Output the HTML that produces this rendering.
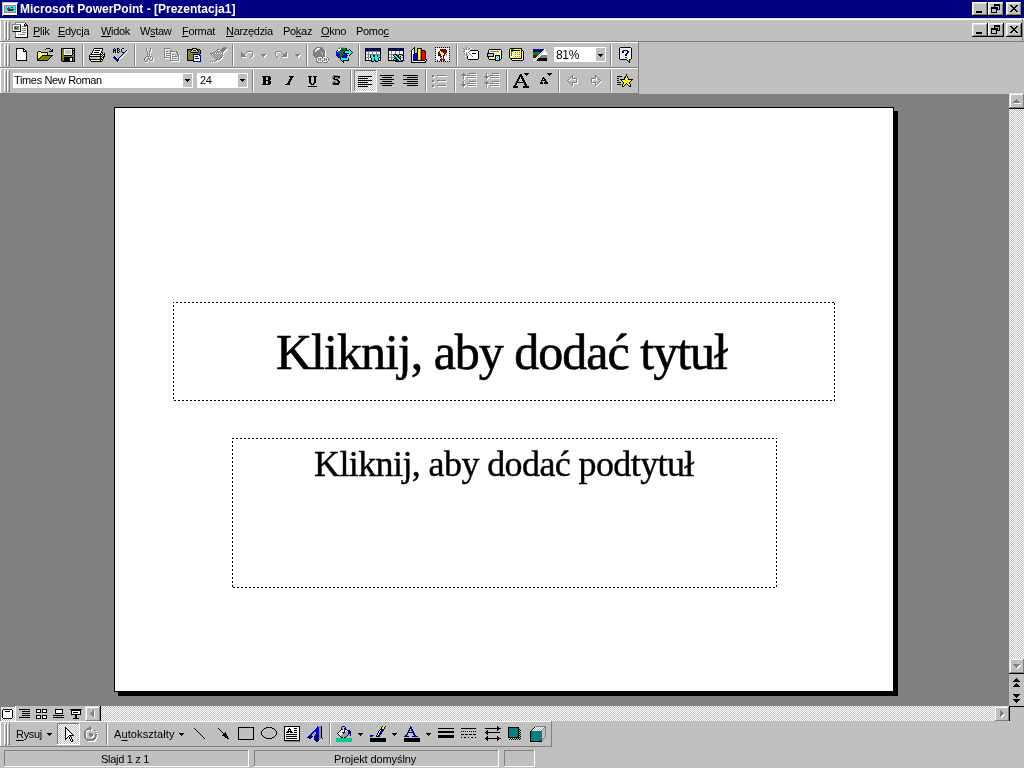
<!DOCTYPE html>
<html><head><meta charset="utf-8">
<style>
*{margin:0;padding:0;box-sizing:border-box}
html,body{width:1024px;height:768px;overflow:hidden;background:#c0c0c0;font-family:"Liberation Sans",sans-serif;font-size:11px;color:#000;position:relative}
.a{position:absolute}
.t{white-space:nowrap;line-height:13px;letter-spacing:-0.3px;will-change:transform}
.u{text-decoration:underline;text-underline-offset:2px}
.dt{font-family:"Liberation Serif",serif;white-space:nowrap;position:absolute;will-change:transform}
svg{display:block}
</style></head><body>

<div class="a" style="left:0px;top:0px;width:1024px;height:18px;background:#000080;"></div>
<div class="a t" style="left:20px;top:1px;color:#fff;font-weight:bold;font-size:12px;line-height:16px;letter-spacing:0px">Microsoft PowerPoint - [Prezentacja1]</div>
<div class="a" style="left:972px;top:2px;width:16px;height:14px;background:#000;"></div><div class="a" style="left:972px;top:2px;width:15px;height:13px;background:#fff;"></div><div class="a" style="left:973px;top:3px;width:14px;height:12px;background:#808080;"></div><div class="a" style="left:973px;top:3px;width:13px;height:11px;background:#dfdfdf;"></div><div class="a" style="left:974px;top:4px;width:12px;height:10px;background:#c0c0c0;"></div>
<div class="a" style="left:988px;top:2px;width:16px;height:14px;background:#000;"></div><div class="a" style="left:988px;top:2px;width:15px;height:13px;background:#fff;"></div><div class="a" style="left:989px;top:3px;width:14px;height:12px;background:#808080;"></div><div class="a" style="left:989px;top:3px;width:13px;height:11px;background:#dfdfdf;"></div><div class="a" style="left:990px;top:4px;width:12px;height:10px;background:#c0c0c0;"></div>
<div class="a" style="left:1006px;top:2px;width:16px;height:14px;background:#000;"></div><div class="a" style="left:1006px;top:2px;width:15px;height:13px;background:#fff;"></div><div class="a" style="left:1007px;top:3px;width:14px;height:12px;background:#808080;"></div><div class="a" style="left:1007px;top:3px;width:13px;height:11px;background:#dfdfdf;"></div><div class="a" style="left:1008px;top:4px;width:12px;height:10px;background:#c0c0c0;"></div>
<div class="a" style="left:976px;top:11px;width:6px;height:2px;background:#000;"></div>
<svg class="a" style="left:991px;top:4px" width="9" height="9" viewBox="0 0 9 9" shape-rendering="crispEdges"><path fill="#000" d="M3 0h6v1h-6zM3 1h6v1h-6zM3 2h1v1h-1zM8 2h1v1h-1zM0 3h7v1h-7zM8 3h1v1h-1zM0 4h7v1h-7zM8 4h1v1h-1zM0 5h1v1h-1zM5 5h4v1h-4zM0 6h1v1h-1zM5 6h1v1h-1zM0 7h1v1h-1zM5 7h1v1h-1zM0 8h6v1h-6z"/></svg>
<svg class="a" style="left:1010px;top:5px" width="8" height="7" viewBox="0 0 8 7" shape-rendering="crispEdges"><path fill="#000" d="M0 0h2v1h-2zM6 0h2v1h-2zM1 1h2v1h-2zM5 1h2v1h-2zM2 2h4v1h-4zM3 3h2v1h-2zM2 4h4v1h-4zM1 5h2v1h-2zM5 5h2v1h-2zM0 6h2v1h-2zM6 6h2v1h-2z"/></svg>
<div class="a" style="left:0px;top:18px;width:1024px;height:1px;background:#dfdfdf;"></div>
<div class="a" style="left:0px;top:19px;width:1024px;height:1px;background:#fff;"></div>
<div class="a" style="left:0px;top:18px;width:1px;height:75px;background:#fff;"></div>
<div class="a" style="left:0px;top:41px;width:1024px;height:1px;background:#808080;"></div>
<div class="a" style="left:1022px;top:19px;width:1px;height:23px;background:#808080;"></div>
<div class="a" style="left:4px;top:21px;width:3px;height:19px;background:#c0c0c0;"></div><div class="a" style="left:4px;top:21px;width:1px;height:19px;background:#fff;"></div><div class="a" style="left:4px;top:21px;width:2px;height:1px;background:#fff;"></div><div class="a" style="left:6px;top:21px;width:1px;height:19px;background:#808080;"></div><div class="a" style="left:5px;top:39px;width:2px;height:1px;background:#808080;"></div><div class="a" style="left:7px;top:21px;width:3px;height:19px;background:#c0c0c0;"></div><div class="a" style="left:7px;top:21px;width:1px;height:19px;background:#fff;"></div><div class="a" style="left:7px;top:21px;width:2px;height:1px;background:#fff;"></div><div class="a" style="left:9px;top:21px;width:1px;height:19px;background:#808080;"></div><div class="a" style="left:8px;top:39px;width:2px;height:1px;background:#808080;"></div>
<div class="a t" style="left:33px;top:25px;"><span class=u style="text-underline-offset:1px">P</span>lik</div>
<div class="a t" style="left:58px;top:25px;"><span class=u style="text-underline-offset:1px">E</span>dycja</div>
<div class="a t" style="left:101px;top:25px;"><span class=u style="text-underline-offset:1px">W</span>idok</div>
<div class="a t" style="left:140px;top:25px;">W<span class=u style="text-underline-offset:1px">s</span>taw</div>
<div class="a t" style="left:182px;top:25px;"><span class=u style="text-underline-offset:1px">F</span>ormat</div>
<div class="a t" style="left:226px;top:25px;"><span class=u style="text-underline-offset:1px">N</span>arzędzia</div>
<div class="a t" style="left:283px;top:25px;">Po<span class=u style="text-underline-offset:1px">k</span>az</div>
<div class="a t" style="left:321px;top:25px;"><span class=u style="text-underline-offset:1px">O</span>kno</div>
<div class="a t" style="left:356px;top:25px;">Pomo<span class=u style="text-underline-offset:1px">c</span></div>
<div class="a" style="left:972px;top:23px;width:16px;height:14px;background:#000;"></div><div class="a" style="left:972px;top:23px;width:15px;height:13px;background:#fff;"></div><div class="a" style="left:973px;top:24px;width:14px;height:12px;background:#808080;"></div><div class="a" style="left:973px;top:24px;width:13px;height:11px;background:#dfdfdf;"></div><div class="a" style="left:974px;top:25px;width:12px;height:10px;background:#c0c0c0;"></div>
<div class="a" style="left:988px;top:23px;width:16px;height:14px;background:#000;"></div><div class="a" style="left:988px;top:23px;width:15px;height:13px;background:#fff;"></div><div class="a" style="left:989px;top:24px;width:14px;height:12px;background:#808080;"></div><div class="a" style="left:989px;top:24px;width:13px;height:11px;background:#dfdfdf;"></div><div class="a" style="left:990px;top:25px;width:12px;height:10px;background:#c0c0c0;"></div>
<div class="a" style="left:1006px;top:23px;width:16px;height:14px;background:#000;"></div><div class="a" style="left:1006px;top:23px;width:15px;height:13px;background:#fff;"></div><div class="a" style="left:1007px;top:24px;width:14px;height:12px;background:#808080;"></div><div class="a" style="left:1007px;top:24px;width:13px;height:11px;background:#dfdfdf;"></div><div class="a" style="left:1008px;top:25px;width:12px;height:10px;background:#c0c0c0;"></div>
<div class="a" style="left:976px;top:32px;width:6px;height:2px;background:#000;"></div>
<svg class="a" style="left:991px;top:25px" width="9" height="9" viewBox="0 0 9 9" shape-rendering="crispEdges"><path fill="#000" d="M3 0h6v1h-6zM3 1h6v1h-6zM3 2h1v1h-1zM8 2h1v1h-1zM0 3h7v1h-7zM8 3h1v1h-1zM0 4h7v1h-7zM8 4h1v1h-1zM0 5h1v1h-1zM5 5h4v1h-4zM0 6h1v1h-1zM5 6h1v1h-1zM0 7h1v1h-1zM5 7h1v1h-1zM0 8h6v1h-6z"/></svg>
<svg class="a" style="left:1010px;top:26px" width="8" height="7" viewBox="0 0 8 7" shape-rendering="crispEdges"><path fill="#000" d="M0 0h2v1h-2zM6 0h2v1h-2zM1 1h2v1h-2zM5 1h2v1h-2zM2 2h4v1h-4zM3 3h2v1h-2zM2 4h4v1h-4zM1 5h2v1h-2zM5 5h2v1h-2zM0 6h2v1h-2zM6 6h2v1h-2z"/></svg>
<div class="a" style="left:0px;top:42px;width:638px;height:1px;background:#fff;"></div>
<div class="a" style="left:0px;top:67px;width:639px;height:1px;background:#808080;"></div>
<div class="a" style="left:638px;top:42px;width:1px;height:26px;background:#808080;"></div>
<div class="a" style="left:4px;top:44px;width:3px;height:22px;background:#c0c0c0;"></div><div class="a" style="left:4px;top:44px;width:1px;height:22px;background:#fff;"></div><div class="a" style="left:4px;top:44px;width:2px;height:1px;background:#fff;"></div><div class="a" style="left:6px;top:44px;width:1px;height:22px;background:#808080;"></div><div class="a" style="left:5px;top:65px;width:2px;height:1px;background:#808080;"></div><div class="a" style="left:7px;top:44px;width:3px;height:22px;background:#c0c0c0;"></div><div class="a" style="left:7px;top:44px;width:1px;height:22px;background:#fff;"></div><div class="a" style="left:7px;top:44px;width:2px;height:1px;background:#fff;"></div><div class="a" style="left:9px;top:44px;width:1px;height:22px;background:#808080;"></div><div class="a" style="left:8px;top:65px;width:2px;height:1px;background:#808080;"></div>
<div class="a" style="left:0px;top:68px;width:638px;height:1px;background:#fff;"></div>
<div class="a" style="left:638px;top:68px;width:1px;height:26px;background:#808080;"></div>
<div class="a" style="left:0px;top:93px;width:639px;height:1px;background:#808080;"></div>
<div class="a" style="left:4px;top:70px;width:3px;height:22px;background:#c0c0c0;"></div><div class="a" style="left:4px;top:70px;width:1px;height:22px;background:#fff;"></div><div class="a" style="left:4px;top:70px;width:2px;height:1px;background:#fff;"></div><div class="a" style="left:6px;top:70px;width:1px;height:22px;background:#808080;"></div><div class="a" style="left:5px;top:91px;width:2px;height:1px;background:#808080;"></div><div class="a" style="left:7px;top:70px;width:3px;height:22px;background:#c0c0c0;"></div><div class="a" style="left:7px;top:70px;width:1px;height:22px;background:#fff;"></div><div class="a" style="left:7px;top:70px;width:2px;height:1px;background:#fff;"></div><div class="a" style="left:9px;top:70px;width:1px;height:22px;background:#808080;"></div><div class="a" style="left:8px;top:91px;width:2px;height:1px;background:#808080;"></div>
<div class="a" style="left:13px;top:73px;width:180px;height:15px;background:#fff;"></div>
<div class="a" style="left:183px;top:74px;width:9px;height:13px;background:#c0c0c0;"></div>
<div class="a t" style="left:14px;top:74px;letter-spacing:-0.35px">Times New Roman</div>
<div class="a" style="left:197px;top:73px;width:51px;height:15px;background:#fff;"></div>
<div class="a" style="left:238px;top:74px;width:9px;height:13px;background:#c0c0c0;"></div>
<div class="a t" style="left:200px;top:74px;">24</div>
<div class="a" style="left:0px;top:94px;width:1009px;height:612px;background:#808080;"></div>
<div class="a" style="left:114px;top:107px;width:780px;height:585px;background:#fff;border:1px solid #000;box-shadow:4px 4px 0 #000"></div>
<div class="a" style="left:173px;top:302px;width:662px;height:1px;background:repeating-linear-gradient(90deg,#000 0 2px,transparent 2px 4px) 3px 0/4px 1px;"></div>
<div class="a" style="left:173px;top:400px;width:662px;height:1px;background:repeating-linear-gradient(90deg,#000 0 2px,transparent 2px 4px) 1px 0/4px 1px;"></div>
<div class="a" style="left:173px;top:302px;width:1px;height:99px;background:repeating-linear-gradient(180deg,#000 0 2px,transparent 2px 4px) 0 3px/1px 4px;"></div>
<div class="a" style="left:834px;top:302px;width:1px;height:99px;background:repeating-linear-gradient(180deg,#000 0 2px,transparent 2px 4px) 0 1px/1px 4px;"></div>
<div class="a" style="left:232px;top:438px;width:545px;height:1px;background:repeating-linear-gradient(90deg,#000 0 2px,transparent 2px 4px) 0px 0/4px 1px;"></div>
<div class="a" style="left:232px;top:587px;width:545px;height:1px;background:repeating-linear-gradient(90deg,#000 0 2px,transparent 2px 4px) 1px 0/4px 1px;"></div>
<div class="a" style="left:232px;top:438px;width:1px;height:150px;background:repeating-linear-gradient(180deg,#000 0 2px,transparent 2px 4px) 0 3px/1px 4px;"></div>
<div class="a" style="left:776px;top:438px;width:1px;height:150px;background:repeating-linear-gradient(180deg,#000 0 2px,transparent 2px 4px) 0 3px/1px 4px;"></div>
<div class="dt" style="left:276px;top:323px;font-size:50px;line-height:58px;letter-spacing:-1px;-webkit-text-stroke:0.6px #000">Kliknij, aby dodać tytuł</div>
<div class="dt" style="left:314px;top:443px;font-size:36px;line-height:42px;letter-spacing:-0.6px;-webkit-text-stroke:0.4px #000">Kliknij, aby dodać podtytuł</div>
<svg class="a" style="left:1009px;top:109px" width="15" height="549" shape-rendering="crispEdges"><defs><pattern id="p1" x="0" y="0" width="2" height="2" patternUnits="userSpaceOnUse"><rect width="2" height="2" fill="#c0c0c0"/><rect width="1" height="1" fill="#fff"/><rect x="1" y="1" width="1" height="1" fill="#fff"/></pattern></defs><rect width="15" height="549" fill="url(#p1)"/></svg>
<div class="a" style="left:1009px;top:93px;width:16px;height:16px;background:#000;"></div><div class="a" style="left:1009px;top:93px;width:15px;height:15px;background:#dfdfdf;"></div><div class="a" style="left:1010px;top:94px;width:14px;height:14px;background:#808080;"></div><div class="a" style="left:1010px;top:94px;width:13px;height:13px;background:#fff;"></div><div class="a" style="left:1011px;top:95px;width:12px;height:12px;background:#c0c0c0;"></div>
<div class="a" style="left:1009px;top:658px;width:16px;height:16px;background:#000;"></div><div class="a" style="left:1009px;top:658px;width:15px;height:15px;background:#dfdfdf;"></div><div class="a" style="left:1010px;top:659px;width:14px;height:14px;background:#808080;"></div><div class="a" style="left:1010px;top:659px;width:13px;height:13px;background:#fff;"></div><div class="a" style="left:1011px;top:660px;width:12px;height:12px;background:#c0c0c0;"></div>
<div class="a" style="left:1009px;top:674px;width:15px;height:32px;background:#c0c0c0;"></div>
<div class="a" style="left:0px;top:706px;width:1009px;height:15px;background:#c0c0c0;"></div>
<div class="a" style="left:0px;top:706px;width:16px;height:16px;background:#fff;"></div><div class="a" style="left:0px;top:706px;width:15px;height:15px;background:#808080;"></div><svg class="a" style="left:1px;top:707px" width="14" height="14" shape-rendering="crispEdges"><defs><pattern id="p2" x="0" y="0" width="2" height="2" patternUnits="userSpaceOnUse"><rect width="2" height="2" fill="#c0c0c0"/><rect width="1" height="1" fill="#fff"/><rect x="1" y="1" width="1" height="1" fill="#fff"/></pattern></defs><rect width="14" height="14" fill="url(#p2)"/></svg>
<svg class="a" style="left:101px;top:706px" width="893" height="15" shape-rendering="crispEdges"><defs><pattern id="p3" x="1" y="0" width="2" height="2" patternUnits="userSpaceOnUse"><rect width="2" height="2" fill="#c0c0c0"/><rect width="1" height="1" fill="#fff"/><rect x="1" y="1" width="1" height="1" fill="#fff"/></pattern></defs><rect width="893" height="15" fill="url(#p3)"/></svg>
<div class="a" style="left:85px;top:706px;width:16px;height:16px;background:#000;"></div><div class="a" style="left:85px;top:706px;width:15px;height:15px;background:#dfdfdf;"></div><div class="a" style="left:86px;top:707px;width:14px;height:14px;background:#808080;"></div><div class="a" style="left:86px;top:707px;width:13px;height:13px;background:#fff;"></div><div class="a" style="left:87px;top:708px;width:12px;height:12px;background:#c0c0c0;"></div>
<div class="a" style="left:994px;top:706px;width:16px;height:16px;background:#000;"></div><div class="a" style="left:994px;top:706px;width:15px;height:15px;background:#dfdfdf;"></div><div class="a" style="left:995px;top:707px;width:14px;height:14px;background:#808080;"></div><div class="a" style="left:995px;top:707px;width:13px;height:13px;background:#fff;"></div><div class="a" style="left:996px;top:708px;width:12px;height:12px;background:#c0c0c0;"></div>
<div class="a" style="left:552px;top:721px;width:472px;height:1px;background:#c0c0c0;"></div>
<div class="a" style="left:1009px;top:706px;width:15px;height:15px;background:#c0c0c0;"></div>
<div class="a" style="left:1009px;top:706px;width:15px;height:1px;background:#000;"></div>
<div class="a" style="left:1009px;top:706px;width:1px;height:15px;background:#000;"></div>
<div class="a" style="left:0px;top:721px;width:551px;height:1px;background:#fff;"></div>
<div class="a" style="left:0px;top:721px;width:1px;height:25px;background:#fff;"></div>
<div class="a" style="left:0px;top:746px;width:552px;height:1px;background:#808080;"></div>
<div class="a" style="left:551px;top:721px;width:1px;height:26px;background:#808080;"></div>
<div class="a" style="left:4px;top:723px;width:3px;height:22px;background:#c0c0c0;"></div><div class="a" style="left:4px;top:723px;width:1px;height:22px;background:#fff;"></div><div class="a" style="left:4px;top:723px;width:2px;height:1px;background:#fff;"></div><div class="a" style="left:6px;top:723px;width:1px;height:22px;background:#808080;"></div><div class="a" style="left:5px;top:744px;width:2px;height:1px;background:#808080;"></div><div class="a" style="left:7px;top:723px;width:3px;height:22px;background:#c0c0c0;"></div><div class="a" style="left:7px;top:723px;width:1px;height:22px;background:#fff;"></div><div class="a" style="left:7px;top:723px;width:2px;height:1px;background:#fff;"></div><div class="a" style="left:9px;top:723px;width:1px;height:22px;background:#808080;"></div><div class="a" style="left:8px;top:744px;width:2px;height:1px;background:#808080;"></div>
<div class="a t" style="left:16px;top:728px;"><span class=u>R</span>ysuj</div>
<div class="a t" style="left:114px;top:728px;letter-spacing:0.1px">A<span class=u>u</span>tokształty</div>
<div class="a" style="left:4px;top:750px;width:245px;height:17px;background:#fff;"></div><div class="a" style="left:4px;top:750px;width:244px;height:16px;background:#808080;"></div><div class="a" style="left:5px;top:751px;width:243px;height:15px;background:#c0c0c0;"></div>
<div class="a" style="left:254px;top:750px;width:245px;height:17px;background:#fff;"></div><div class="a" style="left:254px;top:750px;width:244px;height:16px;background:#808080;"></div><div class="a" style="left:255px;top:751px;width:243px;height:15px;background:#c0c0c0;"></div>
<div class="a" style="left:504px;top:750px;width:31px;height:17px;background:#fff;"></div><div class="a" style="left:504px;top:750px;width:30px;height:16px;background:#808080;"></div><div class="a" style="left:505px;top:751px;width:29px;height:15px;background:#c0c0c0;"></div>
<div class="a t" style="left:101px;top:753px;">Slajd 1 z 1</div>
<div class="a t" style="left:334px;top:753px;letter-spacing:-0.1px">Projekt domyślny</div>
<div class="a" style="left:82px;top:44px;width:1px;height:22px;background:#808080;"></div><div class="a" style="left:83px;top:44px;width:1px;height:22px;background:#fff;"></div>
<div class="a" style="left:134px;top:44px;width:1px;height:22px;background:#808080;"></div><div class="a" style="left:135px;top:44px;width:1px;height:22px;background:#fff;"></div>
<div class="a" style="left:232px;top:44px;width:1px;height:22px;background:#808080;"></div><div class="a" style="left:233px;top:44px;width:1px;height:22px;background:#fff;"></div>
<div class="a" style="left:306px;top:44px;width:1px;height:22px;background:#808080;"></div><div class="a" style="left:307px;top:44px;width:1px;height:22px;background:#fff;"></div>
<div class="a" style="left:358px;top:44px;width:1px;height:22px;background:#808080;"></div><div class="a" style="left:359px;top:44px;width:1px;height:22px;background:#fff;"></div>
<div class="a" style="left:456px;top:44px;width:1px;height:22px;background:#808080;"></div><div class="a" style="left:457px;top:44px;width:1px;height:22px;background:#fff;"></div>
<div class="a" style="left:610px;top:44px;width:1px;height:22px;background:#808080;"></div><div class="a" style="left:611px;top:44px;width:1px;height:22px;background:#fff;"></div>
<div class="a" style="left:252px;top:70px;width:1px;height:22px;background:#808080;"></div><div class="a" style="left:253px;top:70px;width:1px;height:22px;background:#fff;"></div>
<div class="a" style="left:350px;top:70px;width:1px;height:22px;background:#808080;"></div><div class="a" style="left:351px;top:70px;width:1px;height:22px;background:#fff;"></div>
<div class="a" style="left:425px;top:70px;width:1px;height:22px;background:#808080;"></div><div class="a" style="left:426px;top:70px;width:1px;height:22px;background:#fff;"></div>
<div class="a" style="left:454px;top:70px;width:1px;height:22px;background:#808080;"></div><div class="a" style="left:455px;top:70px;width:1px;height:22px;background:#fff;"></div>
<div class="a" style="left:506px;top:70px;width:1px;height:22px;background:#808080;"></div><div class="a" style="left:507px;top:70px;width:1px;height:22px;background:#fff;"></div>
<div class="a" style="left:558px;top:70px;width:1px;height:22px;background:#808080;"></div><div class="a" style="left:559px;top:70px;width:1px;height:22px;background:#fff;"></div>
<div class="a" style="left:610px;top:70px;width:1px;height:22px;background:#808080;"></div><div class="a" style="left:611px;top:70px;width:1px;height:22px;background:#fff;"></div>
<div class="a" style="left:106px;top:723px;width:1px;height:22px;background:#808080;"></div><div class="a" style="left:107px;top:723px;width:1px;height:22px;background:#fff;"></div>
<div class="a" style="left:329px;top:723px;width:1px;height:22px;background:#808080;"></div><div class="a" style="left:330px;top:723px;width:1px;height:22px;background:#fff;"></div>
<div class="a" style="left:554px;top:47px;width:52px;height:15px;background:#fff;"></div>
<div class="a" style="left:596px;top:48px;width:9px;height:13px;background:#c0c0c0;"></div>
<div class="a t" style="left:556px;top:49px;font-size:12px">81%</div>
<div class="a" style="left:354px;top:70px;width:23px;height:22px;background:#fff;"></div><div class="a" style="left:354px;top:70px;width:22px;height:21px;background:#808080;"></div><svg class="a" style="left:355px;top:71px" width="21" height="20" shape-rendering="crispEdges"><defs><pattern id="p4" x="0" y="0" width="2" height="2" patternUnits="userSpaceOnUse"><rect width="2" height="2" fill="#c0c0c0"/><rect width="1" height="1" fill="#fff"/><rect x="1" y="1" width="1" height="1" fill="#fff"/></pattern></defs><rect width="21" height="20" fill="url(#p4)"/></svg>
<div class="a" style="left:57px;top:723px;width:23px;height:22px;background:#fff;"></div><div class="a" style="left:57px;top:723px;width:22px;height:21px;background:#808080;"></div><svg class="a" style="left:58px;top:724px" width="21" height="20" shape-rendering="crispEdges"><defs><pattern id="p5" x="0" y="0" width="2" height="2" patternUnits="userSpaceOnUse"><rect width="2" height="2" fill="#c0c0c0"/><rect width="1" height="1" fill="#fff"/><rect x="1" y="1" width="1" height="1" fill="#fff"/></pattern></defs><rect width="21" height="20" fill="url(#p5)"/></svg>
<svg class="a" style="left:2px;top:2px" width="16" height="14" viewBox="0 0 16 14" shape-rendering="crispEdges"><path fill="#c0c0c0" d="M0 0h16v1h-16zM0 1h1v1h-1zM15 1h1v1h-1zM0 2h1v1h-1zM0 3h1v1h-1zM0 4h1v1h-1zM0 5h1v1h-1zM0 6h1v1h-1zM0 7h1v1h-1zM0 8h1v1h-1zM0 9h1v1h-1zM0 10h1v1h-1zM0 11h1v1h-1zM0 12h1v1h-1zM0 13h1v1h-1z"/><path fill="#ffffff" d="M1 1h14v1h-14zM1 2h14v1h-14zM1 3h1v1h-1zM14 3h1v1h-1zM1 4h1v1h-1zM14 4h1v1h-1zM1 5h1v1h-1zM14 5h1v1h-1zM1 6h1v1h-1zM14 6h1v1h-1zM1 7h1v1h-1zM14 7h1v1h-1zM1 8h1v1h-1zM14 8h1v1h-1zM1 9h1v1h-1zM14 9h1v1h-1zM1 10h1v1h-1zM14 10h1v1h-1zM1 11h14v1h-14zM1 12h14v1h-14z"/><path fill="#000000" d="M15 2h1v1h-1zM15 3h1v1h-1zM15 4h1v1h-1zM15 5h1v1h-1zM15 6h1v1h-1zM15 7h1v1h-1zM15 8h1v1h-1zM15 9h1v1h-1zM15 10h1v1h-1zM15 11h1v1h-1zM15 12h1v1h-1zM1 13h15v1h-15z"/><path fill="#a08888" d="M2 3h12v1h-12zM2 4h1v1h-1zM13 4h1v1h-1zM2 5h1v1h-1zM13 5h1v1h-1zM2 6h1v1h-1zM13 6h1v1h-1zM2 7h1v1h-1zM13 7h1v1h-1zM2 8h1v1h-1zM13 8h1v1h-1zM2 9h1v1h-1zM13 9h1v1h-1zM2 10h12v1h-12z"/><path fill="#00ffff" d="M3 4h10v1h-10zM3 5h3v1h-3zM7 5h2v1h-2zM11 5h2v1h-2zM3 6h2v1h-2zM8 6h5v1h-5zM3 7h2v1h-2zM12 7h1v1h-1zM3 8h3v1h-3zM11 8h2v1h-2zM3 9h10v1h-10z"/><path fill="#ff0000" d="M6 5h1v1h-1zM5 6h3v1h-3zM5 7h2v1h-2z"/><path fill="#800000" d="M9 5h2v1h-2zM7 7h5v1h-5zM6 8h5v1h-5z"/></svg>
<svg class="a" style="left:12px;top:22px" width="16" height="16" viewBox="0 0 16 16" shape-rendering="crispEdges"><path fill="#808080" d="M3 0h10v1h-10zM3 1h1v1h-1zM0 2h9v1h-9zM0 3h1v1h-1zM0 4h1v1h-1zM2 4h5v1h-5zM10 4h4v1h-4zM0 5h1v1h-1zM2 5h1v1h-1zM6 5h1v1h-1zM0 6h1v1h-1zM2 6h1v1h-1zM6 6h1v1h-1zM10 6h4v1h-4zM0 7h1v1h-1zM2 7h5v1h-5zM0 8h1v1h-1zM10 8h4v1h-4zM0 9h1v1h-1zM3 10h1v1h-1zM10 10h4v1h-4zM3 11h1v1h-1zM3 12h1v1h-1zM6 12h1v1h-1zM8 12h5v1h-5zM3 13h1v1h-1zM3 14h1v1h-1z"/><path fill="#ffffff" d="M4 1h9v1h-9zM9 2h3v1h-3zM13 2h1v1h-1zM1 3h7v1h-7zM9 3h3v1h-3zM1 4h1v1h-1zM7 4h1v1h-1zM9 4h1v1h-1zM14 4h1v1h-1zM1 5h1v1h-1zM7 5h1v1h-1zM9 5h6v1h-6zM1 6h1v1h-1zM7 6h1v1h-1zM9 6h1v1h-1zM14 6h1v1h-1zM1 7h1v1h-1zM7 7h1v1h-1zM9 7h6v1h-6zM1 8h7v1h-7zM9 8h1v1h-1zM14 8h1v1h-1zM9 9h6v1h-6zM4 10h6v1h-6zM14 10h1v1h-1zM4 11h11v1h-11zM4 12h2v1h-2zM7 12h1v1h-1zM13 12h2v1h-2zM4 13h11v1h-11zM4 14h11v1h-11z"/><path fill="#000000" d="M13 1h1v1h-1zM12 2h1v1h-1zM14 2h1v1h-1zM8 3h1v1h-1zM12 3h4v1h-4zM8 4h1v1h-1zM15 4h1v1h-1zM8 5h1v1h-1zM15 5h1v1h-1zM8 6h1v1h-1zM15 6h1v1h-1zM8 7h1v1h-1zM15 7h1v1h-1zM8 8h1v1h-1zM15 8h1v1h-1zM1 9h8v1h-8zM15 9h1v1h-1zM15 10h1v1h-1zM15 11h1v1h-1zM15 12h1v1h-1zM15 13h1v1h-1zM15 14h1v1h-1zM3 15h13v1h-13z"/><path fill="#800000" d="M3 5h1v1h-1zM5 5h1v1h-1zM3 6h2v1h-2z"/><path fill="#00ffff" d="M4 5h1v1h-1zM5 6h1v1h-1z"/></svg>
<svg class="a" style="left:16px;top:48px" width="11" height="13" viewBox="0 0 11 13" shape-rendering="crispEdges"><path fill="#000000" d="M0 0h8v1h-8zM0 1h1v1h-1zM7 1h2v1h-2zM0 2h1v1h-1zM7 2h1v1h-1zM9 2h1v1h-1zM0 3h1v1h-1zM7 3h4v1h-4zM0 4h1v1h-1zM10 4h1v1h-1zM0 5h1v1h-1zM10 5h1v1h-1zM0 6h1v1h-1zM10 6h1v1h-1zM0 7h1v1h-1zM10 7h1v1h-1zM0 8h1v1h-1zM10 8h1v1h-1zM0 9h1v1h-1zM10 9h1v1h-1zM0 10h1v1h-1zM10 10h1v1h-1zM0 11h1v1h-1zM10 11h1v1h-1zM0 12h11v1h-11z"/><path fill="#ffffff" d="M1 1h6v1h-6zM1 2h6v1h-6zM8 2h1v1h-1zM1 3h6v1h-6zM1 4h9v1h-9zM1 5h9v1h-9zM1 6h9v1h-9zM1 7h9v1h-9zM1 8h9v1h-9zM1 9h9v1h-9zM1 10h9v1h-9zM1 11h9v1h-9z"/></svg>
<svg class="a" style="left:37px;top:48px" width="16" height="13" viewBox="0 0 16 13" shape-rendering="crispEdges"><path fill="#000000" d="M9 0h4v1h-4zM8 1h1v1h-1zM13 1h1v1h-1zM15 1h1v1h-1zM14 2h2v1h-2zM1 3h3v1h-3zM12 3h4v1h-4zM0 4h1v1h-1zM4 4h7v1h-7zM0 5h1v1h-1zM10 5h1v1h-1zM0 6h1v1h-1zM10 6h1v1h-1zM0 7h1v1h-1zM5 7h11v1h-11zM0 8h1v1h-1zM4 8h1v1h-1zM14 8h1v1h-1zM0 9h1v1h-1zM3 9h1v1h-1zM13 9h1v1h-1zM0 10h1v1h-1zM2 10h1v1h-1zM12 10h1v1h-1zM0 11h2v1h-2zM11 11h1v1h-1zM0 12h11v1h-11z"/><path fill="#ffff00" d="M1 4h1v1h-1zM3 4h1v1h-1zM2 5h1v1h-1zM4 5h1v1h-1zM6 5h1v1h-1zM8 5h1v1h-1zM1 6h1v1h-1zM3 6h1v1h-1zM5 6h1v1h-1zM7 6h1v1h-1zM9 6h1v1h-1zM2 7h1v1h-1zM4 7h1v1h-1zM1 8h1v1h-1zM3 8h1v1h-1zM2 9h1v1h-1zM1 10h1v1h-1z"/><path fill="#ffffff" d="M2 4h1v1h-1zM1 5h1v1h-1zM3 5h1v1h-1zM5 5h1v1h-1zM7 5h1v1h-1zM9 5h1v1h-1zM2 6h1v1h-1zM4 6h1v1h-1zM6 6h1v1h-1zM8 6h1v1h-1zM1 7h1v1h-1zM3 7h1v1h-1zM2 8h1v1h-1zM1 9h1v1h-1z"/><path fill="#808000" d="M5 8h9v1h-9zM4 9h9v1h-9zM3 10h9v1h-9zM2 11h9v1h-9z"/></svg>
<svg class="a" style="left:61px;top:48px" width="14" height="14" viewBox="0 0 14 14" shape-rendering="crispEdges"><path fill="#000000" d="M0 0h14v1h-14zM0 1h1v1h-1zM11 1h1v1h-1zM13 1h1v1h-1zM0 2h1v1h-1zM11 2h3v1h-3zM0 3h1v1h-1zM11 3h1v1h-1zM13 3h1v1h-1zM0 4h1v1h-1zM11 4h1v1h-1zM13 4h1v1h-1zM0 5h1v1h-1zM11 5h1v1h-1zM13 5h1v1h-1zM0 6h1v1h-1zM11 6h1v1h-1zM13 6h1v1h-1zM0 7h1v1h-1zM3 7h8v1h-8zM13 7h1v1h-1zM0 8h1v1h-1zM13 8h1v1h-1zM0 9h1v1h-1zM3 9h9v1h-9zM13 9h1v1h-1zM0 10h1v1h-1zM3 10h6v1h-6zM11 10h1v1h-1zM13 10h1v1h-1zM0 11h1v1h-1zM3 11h6v1h-6zM11 11h1v1h-1zM13 11h1v1h-1zM0 12h1v1h-1zM3 12h6v1h-6zM11 12h1v1h-1zM13 12h1v1h-1zM1 13h13v1h-13z"/><path fill="#808000" d="M1 1h2v1h-2zM1 2h2v1h-2zM1 3h2v1h-2zM12 3h1v1h-1zM1 4h2v1h-2zM12 4h1v1h-1zM1 5h2v1h-2zM12 5h1v1h-1zM1 6h2v1h-2zM12 6h1v1h-1zM1 7h2v1h-2zM11 7h2v1h-2zM1 8h12v1h-12zM1 9h2v1h-2zM12 9h1v1h-1zM1 10h2v1h-2zM12 10h1v1h-1zM1 11h2v1h-2zM12 11h1v1h-1zM1 12h2v1h-2zM12 12h1v1h-1z"/><path fill="#ffffff" d="M3 1h8v1h-8zM12 1h1v1h-1zM3 2h1v1h-1zM10 2h1v1h-1zM3 3h1v1h-1zM10 3h1v1h-1zM3 4h1v1h-1zM10 4h1v1h-1zM3 5h1v1h-1zM10 5h1v1h-1zM3 6h8v1h-8zM9 10h2v1h-2zM9 11h2v1h-2zM9 12h2v1h-2z"/><path fill="#c0c0c0" d="M4 2h6v1h-6zM4 3h6v1h-6zM4 4h6v1h-6zM4 5h6v1h-6z"/></svg>
<svg class="a" style="left:89px;top:48px" width="16" height="14" viewBox="0 0 16 14" shape-rendering="crispEdges"><path fill="#000000" d="M5 0h9v1h-9zM4 1h1v1h-1zM13 1h1v1h-1zM4 2h1v1h-1zM6 2h5v1h-5zM13 2h1v1h-1zM3 3h1v1h-1zM12 3h1v1h-1zM3 4h1v1h-1zM5 4h5v1h-5zM12 4h2v1h-2zM2 5h1v1h-1zM11 5h1v1h-1zM13 5h1v1h-1zM15 5h1v1h-1zM1 6h12v1h-12zM14 6h2v1h-2zM0 7h1v1h-1zM11 7h1v1h-1zM13 7h1v1h-1zM15 7h1v1h-1zM0 8h13v1h-13zM14 8h2v1h-2zM0 9h1v1h-1zM11 9h1v1h-1zM13 9h2v1h-2zM0 10h1v1h-1zM11 10h2v1h-2zM14 10h1v1h-1zM0 11h14v1h-14zM1 12h1v1h-1zM11 12h1v1h-1zM13 12h1v1h-1zM2 13h11v1h-11z"/><path fill="#ffffff" d="M5 1h8v1h-8zM5 2h1v1h-1zM11 2h2v1h-2zM4 3h8v1h-8zM4 4h1v1h-1zM10 4h2v1h-2zM3 5h8v1h-8zM12 5h1v1h-1zM14 5h1v1h-1zM13 6h1v1h-1zM1 7h10v1h-10zM12 7h1v1h-1zM14 7h1v1h-1zM13 8h1v1h-1zM12 9h1v1h-1zM13 10h1v1h-1zM2 12h9v1h-9zM12 12h1v1h-1z"/><path fill="#c0c0c0" d="M1 9h10v1h-10zM1 10h6v1h-6zM10 10h1v1h-1z"/><path fill="#ffff00" d="M7 10h3v1h-3z"/></svg>
<svg class="a" style="left:113px;top:48px" width="15" height="14" viewBox="0 0 15 14" shape-rendering="crispEdges"><path fill="#000000" d="M1 0h1v1h-1zM4 0h2v1h-2zM9 0h2v1h-2zM0 1h1v1h-1zM2 1h1v1h-1zM4 1h1v1h-1zM6 1h1v1h-1zM8 1h1v1h-1zM0 2h3v1h-3zM4 2h2v1h-2zM8 2h1v1h-1zM0 3h1v1h-1zM2 3h1v1h-1zM4 3h1v1h-1zM6 3h1v1h-1zM8 3h1v1h-1zM0 4h1v1h-1zM2 4h1v1h-1zM4 4h2v1h-2zM9 4h2v1h-2z"/><path fill="#000080" d="M13 2h1v1h-1zM12 3h1v1h-1zM11 4h1v1h-1zM10 5h1v1h-1zM9 6h1v1h-1zM8 7h1v1h-1zM1 8h1v1h-1zM7 8h1v1h-1zM0 9h3v1h-3zM6 9h1v1h-1zM1 10h3v1h-3zM5 10h1v1h-1zM2 11h4v1h-4zM3 12h3v1h-3zM4 13h1v1h-1z"/><path fill="#ffffff" d="M14 3h1v1h-1zM13 4h1v1h-1zM12 5h1v1h-1zM11 6h1v1h-1zM10 7h1v1h-1zM9 8h1v1h-1zM3 9h1v1h-1zM8 9h1v1h-1zM4 10h1v1h-1zM7 10h1v1h-1zM6 11h1v1h-1zM6 12h1v1h-1zM5 13h1v1h-1z"/></svg>
<svg class="a" style="left:145px;top:49px" width="9" height="14" viewBox="0 0 9 14" shape-rendering="crispEdges"><path fill="#ffffff" d="M2 0h1v1h-1zM6 0h1v1h-1zM2 1h1v1h-1zM6 1h1v1h-1zM2 2h1v1h-1zM6 2h1v1h-1zM3 3h1v1h-1zM5 3h1v1h-1zM3 4h1v1h-1zM5 4h1v1h-1zM4 5h1v1h-1zM3 6h1v1h-1zM5 6h1v1h-1zM3 7h1v1h-1zM5 7h1v1h-1zM2 8h3v1h-3zM6 8h2v1h-2zM1 9h1v1h-1zM4 9h1v1h-1zM6 9h1v1h-1zM8 9h1v1h-1zM0 10h1v1h-1zM4 10h2v1h-2zM8 10h1v1h-1zM0 11h1v1h-1zM3 11h1v1h-1zM5 11h1v1h-1zM8 11h1v1h-1zM0 12h1v1h-1zM3 12h1v1h-1zM6 12h2v1h-2zM1 13h2v1h-2z"/></svg>
<svg class="a" style="left:144px;top:48px" width="9" height="14" viewBox="0 0 9 14" shape-rendering="crispEdges"><path fill="#808080" d="M2 0h1v1h-1zM6 0h1v1h-1zM2 1h1v1h-1zM6 1h1v1h-1zM2 2h1v1h-1zM6 2h1v1h-1zM3 3h1v1h-1zM5 3h1v1h-1zM3 4h1v1h-1zM5 4h1v1h-1zM4 5h1v1h-1zM3 6h1v1h-1zM5 6h1v1h-1zM3 7h1v1h-1zM5 7h1v1h-1zM2 8h3v1h-3zM6 8h2v1h-2zM1 9h1v1h-1zM4 9h1v1h-1zM6 9h1v1h-1zM8 9h1v1h-1zM0 10h1v1h-1zM4 10h2v1h-2zM8 10h1v1h-1zM0 11h1v1h-1zM3 11h1v1h-1zM5 11h1v1h-1zM8 11h1v1h-1zM0 12h1v1h-1zM3 12h1v1h-1zM6 12h2v1h-2zM1 13h2v1h-2z"/></svg>
<svg class="a" style="left:165px;top:49px" width="15" height="13" viewBox="0 0 15 13" shape-rendering="crispEdges"><path fill="#ffffff" d="M0 0h6v1h-6zM0 1h1v1h-1zM6 1h1v1h-1zM0 2h1v1h-1zM7 2h1v1h-1zM0 3h1v1h-1zM2 3h2v1h-2zM6 3h7v1h-7zM0 4h1v1h-1zM6 4h1v1h-1zM12 4h2v1h-2zM0 5h1v1h-1zM2 5h5v1h-5zM13 5h1v1h-1zM0 6h1v1h-1zM6 6h1v1h-1zM8 6h2v1h-2zM13 6h2v1h-2zM0 7h1v1h-1zM2 7h5v1h-5zM14 7h1v1h-1zM0 8h1v1h-1zM6 8h1v1h-1zM8 8h5v1h-5zM14 8h1v1h-1zM0 9h7v1h-7zM14 9h1v1h-1zM6 10h1v1h-1zM8 10h5v1h-5zM14 10h1v1h-1zM6 11h1v1h-1zM14 11h1v1h-1zM6 12h9v1h-9z"/></svg>
<svg class="a" style="left:164px;top:48px" width="15" height="13" viewBox="0 0 15 13" shape-rendering="crispEdges"><path fill="#808080" d="M0 0h6v1h-6zM0 1h1v1h-1zM6 1h1v1h-1zM0 2h1v1h-1zM7 2h1v1h-1zM0 3h1v1h-1zM2 3h2v1h-2zM6 3h7v1h-7zM0 4h1v1h-1zM6 4h1v1h-1zM12 4h2v1h-2zM0 5h1v1h-1zM2 5h5v1h-5zM13 5h1v1h-1zM0 6h1v1h-1zM6 6h1v1h-1zM8 6h2v1h-2zM13 6h2v1h-2zM0 7h1v1h-1zM2 7h5v1h-5zM14 7h1v1h-1zM0 8h1v1h-1zM6 8h1v1h-1zM8 8h5v1h-5zM14 8h1v1h-1zM0 9h7v1h-7zM14 9h1v1h-1zM6 10h1v1h-1zM8 10h5v1h-5zM14 10h1v1h-1zM6 11h1v1h-1zM14 11h1v1h-1zM6 12h9v1h-9z"/></svg>
<svg class="a" style="left:187px;top:48px" width="14" height="14" viewBox="0 0 14 14" shape-rendering="crispEdges"><path fill="#000000" d="M5 0h5v1h-5zM0 1h6v1h-6zM9 1h4v1h-4zM0 2h1v1h-1zM4 2h1v1h-1zM6 2h3v1h-3zM10 2h1v1h-1zM13 2h1v1h-1zM0 3h1v1h-1zM3 3h1v1h-1zM11 3h1v1h-1zM13 3h1v1h-1zM0 4h1v1h-1zM4 4h7v1h-7zM13 4h1v1h-1zM0 5h1v1h-1zM13 5h1v1h-1zM0 6h1v1h-1zM0 7h1v1h-1zM0 8h1v1h-1zM0 9h1v1h-1zM0 10h1v1h-1zM0 11h1v1h-1zM0 12h6v1h-6z"/><path fill="#ffff00" d="M6 1h3v1h-3zM5 2h1v1h-1zM9 2h1v1h-1z"/><path fill="#808000" d="M1 2h1v1h-1zM3 2h1v1h-1zM12 2h1v1h-1zM2 3h1v1h-1zM1 4h1v1h-1zM3 4h1v1h-1zM11 4h1v1h-1zM2 5h1v1h-1zM4 5h1v1h-1zM6 5h1v1h-1zM8 5h1v1h-1zM10 5h1v1h-1zM12 5h1v1h-1zM1 6h1v1h-1zM3 6h1v1h-1zM5 6h1v1h-1zM2 7h1v1h-1zM4 7h1v1h-1zM1 8h1v1h-1zM3 8h1v1h-1zM5 8h1v1h-1zM2 9h1v1h-1zM4 9h1v1h-1zM1 10h1v1h-1zM3 10h1v1h-1zM5 10h1v1h-1zM2 11h1v1h-1zM4 11h1v1h-1z"/><path fill="#808080" d="M2 2h1v1h-1zM11 2h1v1h-1zM1 3h1v1h-1zM12 3h1v1h-1zM2 4h1v1h-1zM12 4h1v1h-1zM1 5h1v1h-1zM3 5h1v1h-1zM5 5h1v1h-1zM7 5h1v1h-1zM9 5h1v1h-1zM11 5h1v1h-1zM2 6h1v1h-1zM4 6h1v1h-1zM1 7h1v1h-1zM3 7h1v1h-1zM5 7h1v1h-1zM2 8h1v1h-1zM4 8h1v1h-1zM1 9h1v1h-1zM3 9h1v1h-1zM5 9h1v1h-1zM2 10h1v1h-1zM4 10h1v1h-1zM1 11h1v1h-1zM3 11h1v1h-1zM5 11h1v1h-1z"/><path fill="#c0c0c0" d="M4 3h7v1h-7z"/><path fill="#000080" d="M6 6h7v1h-7zM6 7h1v1h-1zM12 7h2v1h-2zM6 8h1v1h-1zM8 8h3v1h-3zM13 8h1v1h-1zM6 9h1v1h-1zM13 9h1v1h-1zM6 10h1v1h-1zM8 10h4v1h-4zM13 10h1v1h-1zM6 11h1v1h-1zM13 11h1v1h-1zM6 12h1v1h-1zM13 12h1v1h-1zM6 13h8v1h-8z"/><path fill="#ffffff" d="M7 7h5v1h-5zM7 8h1v1h-1zM11 8h2v1h-2zM7 9h6v1h-6zM7 10h1v1h-1zM12 10h1v1h-1zM7 11h6v1h-6zM7 12h6v1h-6z"/></svg>
<svg class="a" style="left:211px;top:48px" width="17" height="15" viewBox="0 0 17 15" shape-rendering="crispEdges"><path fill="#ffffff" d="M13 0h3v1h-3zM12 1h5v1h-5zM7 2h3v1h-3zM11 2h5v1h-5zM6 3h1v1h-1zM10 3h5v1h-5zM5 4h1v1h-1zM7 4h1v1h-1zM9 4h1v1h-1zM11 4h3v1h-3zM3 5h2v1h-2zM6 5h1v1h-1zM8 5h1v1h-1zM10 5h1v1h-1zM12 5h1v1h-1zM0 6h3v1h-3zM4 6h1v1h-1zM6 6h1v1h-1zM8 6h1v1h-1zM10 6h1v1h-1zM12 6h1v1h-1zM1 7h1v1h-1zM3 7h1v1h-1zM5 7h1v1h-1zM7 7h1v1h-1zM9 7h1v1h-1zM11 7h1v1h-1zM2 8h1v1h-1zM4 8h1v1h-1zM6 8h1v1h-1zM8 8h1v1h-1zM10 8h1v1h-1zM12 8h1v1h-1zM3 9h1v1h-1zM5 9h1v1h-1zM7 9h1v1h-1zM9 9h1v1h-1zM11 9h1v1h-1zM4 10h1v1h-1zM6 10h1v1h-1zM8 10h1v1h-1zM10 10h2v1h-2zM5 11h1v1h-1zM7 11h1v1h-1zM9 11h2v1h-2zM6 12h4v1h-4zM5 13h2v1h-2zM0 14h1v1h-1zM2 14h1v1h-1zM4 14h1v1h-1z"/></svg>
<svg class="a" style="left:210px;top:47px" width="17" height="15" viewBox="0 0 17 15" shape-rendering="crispEdges"><path fill="#808080" d="M13 0h3v1h-3zM12 1h5v1h-5zM7 2h3v1h-3zM11 2h5v1h-5zM6 3h1v1h-1zM10 3h5v1h-5zM5 4h1v1h-1zM7 4h1v1h-1zM9 4h1v1h-1zM11 4h3v1h-3zM3 5h2v1h-2zM6 5h1v1h-1zM8 5h1v1h-1zM10 5h1v1h-1zM12 5h1v1h-1zM0 6h3v1h-3zM4 6h1v1h-1zM6 6h1v1h-1zM8 6h1v1h-1zM10 6h1v1h-1zM12 6h1v1h-1zM1 7h1v1h-1zM3 7h1v1h-1zM5 7h1v1h-1zM7 7h1v1h-1zM9 7h1v1h-1zM11 7h1v1h-1zM2 8h1v1h-1zM4 8h1v1h-1zM6 8h1v1h-1zM8 8h1v1h-1zM10 8h1v1h-1zM12 8h1v1h-1zM3 9h1v1h-1zM5 9h1v1h-1zM7 9h1v1h-1zM9 9h1v1h-1zM11 9h1v1h-1zM4 10h1v1h-1zM6 10h1v1h-1zM8 10h1v1h-1zM10 10h2v1h-2zM5 11h1v1h-1zM7 11h1v1h-1zM9 11h2v1h-2zM6 12h4v1h-4zM5 13h2v1h-2zM0 14h1v1h-1zM2 14h1v1h-1zM4 14h1v1h-1z"/></svg>
<svg class="a" style="left:242px;top:52px" width="12" height="7" viewBox="0 0 12 7" shape-rendering="crispEdges"><path fill="#ffffff" d="M6 0h5v1h-5zM0 1h1v1h-1zM5 1h1v1h-1zM11 1h1v1h-1zM0 2h2v1h-2zM4 2h1v1h-1zM11 2h1v1h-1zM0 3h4v1h-4zM11 3h1v1h-1zM0 4h4v1h-4zM11 4h1v1h-1zM0 5h5v1h-5zM10 5h1v1h-1zM9 6h1v1h-1z"/></svg>
<svg class="a" style="left:241px;top:51px" width="12" height="7" viewBox="0 0 12 7" shape-rendering="crispEdges"><path fill="#808080" d="M6 0h5v1h-5zM0 1h1v1h-1zM5 1h1v1h-1zM11 1h1v1h-1zM0 2h2v1h-2zM4 2h1v1h-1zM11 2h1v1h-1zM0 3h4v1h-4zM11 3h1v1h-1zM0 4h4v1h-4zM11 4h1v1h-1zM0 5h5v1h-5zM10 5h1v1h-1zM9 6h1v1h-1z"/></svg>
<svg class="a" style="left:262px;top:55px" width="5" height="3" viewBox="0 0 5 3" shape-rendering="crispEdges"><path fill="#ffffff" d="M0 0h5v1h-5zM1 1h3v1h-3zM2 2h1v1h-1z"/></svg>
<svg class="a" style="left:261px;top:54px" width="5" height="3" viewBox="0 0 5 3" shape-rendering="crispEdges"><path fill="#808080" d="M0 0h5v1h-5zM1 1h3v1h-3zM2 2h1v1h-1z"/></svg>
<svg class="a" style="left:276px;top:52px" width="12" height="7" viewBox="0 0 12 7" shape-rendering="crispEdges"><path fill="#ffffff" d="M1 0h5v1h-5zM0 1h1v1h-1zM6 1h1v1h-1zM11 1h1v1h-1zM0 2h1v1h-1zM7 2h1v1h-1zM10 2h2v1h-2zM0 3h1v1h-1zM8 3h4v1h-4zM0 4h1v1h-1zM8 4h4v1h-4zM1 5h1v1h-1zM7 5h5v1h-5zM2 6h1v1h-1z"/></svg>
<svg class="a" style="left:275px;top:51px" width="12" height="7" viewBox="0 0 12 7" shape-rendering="crispEdges"><path fill="#808080" d="M1 0h5v1h-5zM0 1h1v1h-1zM6 1h1v1h-1zM11 1h1v1h-1zM0 2h1v1h-1zM7 2h1v1h-1zM10 2h2v1h-2zM0 3h1v1h-1zM8 3h4v1h-4zM0 4h1v1h-1zM8 4h4v1h-4zM1 5h1v1h-1zM7 5h5v1h-5zM2 6h1v1h-1z"/></svg>
<svg class="a" style="left:296px;top:55px" width="5" height="3" viewBox="0 0 5 3" shape-rendering="crispEdges"><path fill="#ffffff" d="M0 0h5v1h-5zM1 1h3v1h-3zM2 2h1v1h-1z"/></svg>
<svg class="a" style="left:295px;top:54px" width="5" height="3" viewBox="0 0 5 3" shape-rendering="crispEdges"><path fill="#808080" d="M0 0h5v1h-5zM1 1h3v1h-3zM2 2h1v1h-1z"/></svg>
<svg class="a" style="left:313px;top:47px" width="16" height="16" viewBox="0 0 16 16" shape-rendering="crispEdges"><path fill="#808080" d="M3 0h6v1h-6zM2 1h2v1h-2zM7 1h3v1h-3zM1 2h2v1h-2zM6 2h5v1h-5zM0 3h2v1h-2zM4 3h8v1h-8zM0 4h2v1h-2zM3 4h9v1h-9zM0 5h8v1h-8zM9 5h3v1h-3zM0 6h12v1h-12zM0 7h9v1h-9zM10 7h2v1h-2zM0 8h12v1h-12zM1 9h11v1h-11zM2 10h3v1h-3zM9 10h1v1h-1zM14 10h1v1h-1zM3 11h1v1h-1zM5 11h1v1h-1zM7 11h1v1h-1zM9 11h1v1h-1zM11 11h1v1h-1zM13 11h1v1h-1zM15 11h1v1h-1zM3 12h1v1h-1zM5 12h1v1h-1zM7 12h1v1h-1zM11 12h1v1h-1zM13 12h1v1h-1zM15 12h1v1h-1zM3 13h1v1h-1zM5 13h1v1h-1zM7 13h1v1h-1zM9 13h1v1h-1zM11 13h1v1h-1zM13 13h1v1h-1zM15 13h1v1h-1zM3 14h2v1h-2zM9 14h1v1h-1zM14 14h1v1h-1zM4 15h5v1h-5zM10 15h5v1h-5z"/><path fill="#ffffff" d="M4 1h3v1h-3zM3 2h3v1h-3zM2 3h2v1h-2zM12 3h1v1h-1zM2 4h1v1h-1zM12 4h1v1h-1zM8 5h1v1h-1zM12 5h1v1h-1zM12 6h1v1h-1zM9 7h1v1h-1zM12 7h1v1h-1zM12 8h1v1h-1zM5 10h4v1h-4zM10 10h4v1h-4zM4 11h1v1h-1zM14 11h1v1h-1zM4 12h1v1h-1zM8 12h3v1h-3zM14 12h1v1h-1zM4 13h1v1h-1zM14 13h1v1h-1zM5 14h4v1h-4zM10 14h4v1h-4zM15 14h1v1h-1z"/><path fill="#c0c0c0" d="M6 11h1v1h-1zM8 11h1v1h-1zM10 11h1v1h-1zM12 11h1v1h-1zM6 12h1v1h-1zM12 12h1v1h-1zM6 13h1v1h-1zM8 13h1v1h-1zM10 13h1v1h-1zM12 13h1v1h-1z"/></svg>
<svg class="a" style="left:336px;top:47px" width="17" height="16" viewBox="0 0 17 16" shape-rendering="crispEdges"><path fill="#a0a090" d="M3 0h6v1h-6zM2 1h1v1h-1zM1 2h1v1h-1z"/><path fill="#008080" d="M3 1h1v1h-1z"/><path fill="#ffffff" d="M4 1h1v1h-1zM2 2h3v1h-3zM2 3h2v1h-2zM1 4h1v1h-1z"/><path fill="#008000" d="M5 1h5v1h-5zM5 2h5v1h-5zM7 3h2v1h-2zM2 4h6v1h-6zM2 5h5v1h-5zM3 6h4v1h-4zM4 7h4v1h-4zM4 8h2v1h-2zM4 9h1v1h-1z"/><path fill="#000000" d="M10 1h1v1h-1zM10 2h1v1h-1zM13 2h1v1h-1zM9 3h4v1h-4zM14 3h1v1h-1zM8 4h1v1h-1zM15 4h1v1h-1zM8 5h1v1h-1zM16 5h1v1h-1zM7 6h6v1h-6zM15 6h1v1h-1zM10 7h1v1h-1zM14 7h1v1h-1zM11 8h1v1h-1zM13 8h1v1h-1zM10 9h1v1h-1zM2 10h1v1h-1zM4 10h1v1h-1zM6 10h1v1h-1zM10 10h1v1h-1zM4 11h1v1h-1zM12 11h1v1h-1zM4 12h1v1h-1zM12 12h1v1h-1zM5 13h1v1h-1zM7 13h6v1h-6zM6 14h2v1h-2zM7 15h1v1h-1z"/><path fill="#0000ff" d="M1 3h1v1h-1zM4 3h3v1h-3zM0 4h1v1h-1zM0 5h2v1h-2zM0 6h3v1h-3zM0 7h4v1h-4zM8 7h2v1h-2zM0 8h4v1h-4zM6 8h5v1h-5zM1 9h3v1h-3zM5 9h5v1h-5zM3 10h1v1h-1zM7 10h3v1h-3z"/><path fill="#00ffff" d="M13 3h1v1h-1zM9 4h6v1h-6zM9 5h7v1h-7zM13 6h2v1h-2zM13 7h1v1h-1zM5 10h1v1h-1zM5 11h7v1h-7zM5 12h7v1h-7zM6 13h1v1h-1z"/><path fill="#000080" d="M7 5h1v1h-1z"/></svg>
<svg class="a" style="left:365px;top:48px" width="16" height="14" viewBox="0 0 16 14" shape-rendering="crispEdges"><path fill="#000000" d="M0 0h16v1h-16zM0 1h1v1h-1zM15 1h1v1h-1zM0 2h1v1h-1zM15 2h1v1h-1zM0 3h1v1h-1zM15 3h1v1h-1zM0 4h1v1h-1zM15 4h1v1h-1zM0 5h1v1h-1zM15 5h1v1h-1zM0 6h1v1h-1zM15 6h1v1h-1zM0 7h1v1h-1zM5 7h1v1h-1zM8 7h2v1h-2zM12 7h1v1h-1zM15 7h1v1h-1zM0 8h1v1h-1zM5 8h1v1h-1zM8 8h2v1h-2zM12 8h1v1h-1zM15 8h1v1h-1zM0 9h1v1h-1zM5 9h1v1h-1zM14 9h2v1h-2zM0 10h1v1h-1zM6 10h1v1h-1zM9 10h1v1h-1zM13 10h1v1h-1zM15 10h1v1h-1zM0 11h1v1h-1zM6 11h1v1h-1zM9 11h1v1h-1zM13 11h1v1h-1zM15 11h1v1h-1zM0 12h7v1h-7zM9 12h2v1h-2zM13 12h3v1h-3zM6 13h3v1h-3zM10 13h3v1h-3z"/><path fill="#000080" d="M1 1h14v1h-14zM1 2h14v1h-14z"/><path fill="#808080" d="M1 3h14v1h-14zM3 4h1v1h-1zM7 4h1v1h-1zM11 4h1v1h-1zM3 5h1v1h-1zM7 5h1v1h-1zM11 5h1v1h-1zM1 6h14v1h-14zM3 7h1v1h-1zM3 8h1v1h-1zM1 9h4v1h-4zM3 10h1v1h-1zM3 11h1v1h-1z"/><path fill="#ffffff" d="M1 4h2v1h-2zM4 4h3v1h-3zM8 4h3v1h-3zM12 4h3v1h-3zM1 5h2v1h-2zM4 5h3v1h-3zM8 5h3v1h-3zM12 5h3v1h-3zM1 7h2v1h-2zM4 7h1v1h-1zM1 8h2v1h-2zM4 8h1v1h-1zM1 10h2v1h-2zM4 10h2v1h-2zM14 10h1v1h-1zM1 11h2v1h-2zM4 11h2v1h-2zM14 11h1v1h-1z"/><path fill="#00ffff" d="M6 7h2v1h-2zM10 7h2v1h-2zM13 7h2v1h-2zM6 8h2v1h-2zM10 8h2v1h-2zM13 8h2v1h-2zM6 9h8v1h-8zM7 10h2v1h-2zM10 10h3v1h-3zM7 11h2v1h-2zM10 11h3v1h-3zM7 12h2v1h-2zM11 12h2v1h-2z"/></svg>
<svg class="a" style="left:388px;top:48px" width="16" height="14" viewBox="0 0 16 14" shape-rendering="crispEdges"><path fill="#000000" d="M0 0h16v1h-16zM0 1h1v1h-1zM15 1h1v1h-1zM0 2h1v1h-1zM15 2h1v1h-1zM0 3h1v1h-1zM15 3h1v1h-1zM0 4h1v1h-1zM15 4h1v1h-1zM0 5h1v1h-1zM15 5h1v1h-1zM0 6h1v1h-1zM6 6h3v1h-3zM11 6h3v1h-3zM15 6h1v1h-1zM0 7h1v1h-1zM5 7h1v1h-1zM8 7h3v1h-3zM14 7h2v1h-2zM0 8h1v1h-1zM6 8h1v1h-1zM9 8h2v1h-2zM12 8h1v1h-1zM15 8h1v1h-1zM0 9h1v1h-1zM7 9h1v1h-1zM10 9h2v1h-2zM15 9h1v1h-1zM0 10h1v1h-1zM6 10h3v1h-3zM11 10h2v1h-2zM15 10h1v1h-1zM0 11h1v1h-1zM5 11h1v1h-1zM8 11h2v1h-2zM12 11h1v1h-1zM15 11h1v1h-1zM0 12h11v1h-11zM13 12h3v1h-3zM7 13h8v1h-8z"/><path fill="#000080" d="M1 1h14v1h-14zM1 2h14v1h-14z"/><path fill="#ffffff" d="M1 3h2v1h-2zM4 3h3v1h-3zM8 3h3v1h-3zM12 3h3v1h-3zM1 4h2v1h-2zM4 4h3v1h-3zM8 4h3v1h-3zM12 4h3v1h-3zM1 5h2v1h-2zM4 5h3v1h-3zM8 5h3v1h-3zM12 5h3v1h-3zM1 7h2v1h-2zM4 7h1v1h-1zM1 8h2v1h-2zM4 8h2v1h-2zM13 8h2v1h-2zM1 10h2v1h-2zM4 10h2v1h-2zM13 10h2v1h-2zM1 11h2v1h-2zM4 11h1v1h-1zM13 11h2v1h-2z"/><path fill="#808080" d="M3 3h1v1h-1zM7 3h1v1h-1zM11 3h1v1h-1zM3 4h1v1h-1zM7 4h1v1h-1zM11 4h1v1h-1zM3 5h1v1h-1zM7 5h1v1h-1zM11 5h1v1h-1zM1 6h5v1h-5zM9 6h2v1h-2zM14 6h1v1h-1zM3 7h1v1h-1zM3 8h1v1h-1zM1 9h6v1h-6zM12 9h3v1h-3zM3 10h1v1h-1zM3 11h1v1h-1z"/><path fill="#00ffff" d="M6 7h2v1h-2zM11 7h3v1h-3zM7 8h2v1h-2zM11 8h1v1h-1zM8 9h2v1h-2zM9 10h2v1h-2zM6 11h2v1h-2zM10 11h2v1h-2zM11 12h2v1h-2z"/></svg>
<svg class="a" style="left:411px;top:47px" width="16" height="16" viewBox="0 0 16 16" shape-rendering="crispEdges"><path fill="#000000" d="M3 0h1v1h-1zM2 1h2v1h-2zM6 1h5v1h-5zM1 2h1v1h-1zM3 2h1v1h-1zM6 2h1v1h-1zM10 2h1v1h-1zM0 3h1v1h-1zM3 3h1v1h-1zM6 3h1v1h-1zM10 3h4v1h-4zM0 4h1v1h-1zM3 4h1v1h-1zM6 4h1v1h-1zM10 4h1v1h-1zM14 4h1v1h-1zM0 5h1v1h-1zM3 5h1v1h-1zM6 5h1v1h-1zM10 5h1v1h-1zM14 5h1v1h-1zM0 6h1v1h-1zM3 6h4v1h-4zM10 6h1v1h-1zM14 6h1v1h-1zM0 7h1v1h-1zM6 7h1v1h-1zM10 7h1v1h-1zM14 7h1v1h-1zM0 8h1v1h-1zM6 8h1v1h-1zM10 8h1v1h-1zM14 8h1v1h-1zM0 9h1v1h-1zM6 9h1v1h-1zM10 9h1v1h-1zM14 9h1v1h-1zM0 10h1v1h-1zM6 10h1v1h-1zM10 10h1v1h-1zM14 10h1v1h-1zM0 11h1v1h-1zM6 11h1v1h-1zM10 11h1v1h-1zM14 11h1v1h-1zM0 12h1v1h-1zM6 12h1v1h-1zM10 12h1v1h-1zM14 12h2v1h-2zM0 13h1v1h-1zM2 13h12v1h-12zM15 13h1v1h-1zM0 14h1v1h-1zM14 14h1v1h-1zM0 15h15v1h-15z"/><path fill="#ffffff" d="M2 2h1v1h-1zM1 3h1v1h-1zM1 4h2v1h-2zM1 5h1v1h-1zM1 6h2v1h-2zM1 7h1v1h-1zM1 8h1v1h-1zM1 9h1v1h-1zM1 10h1v1h-1zM1 11h1v1h-1zM1 12h1v1h-1zM1 13h1v1h-1zM14 13h1v1h-1zM1 14h13v1h-13z"/><path fill="#ffff00" d="M7 2h2v1h-2zM7 3h2v1h-2zM7 4h2v1h-2zM7 5h2v1h-2zM7 6h2v1h-2zM7 7h2v1h-2zM7 8h2v1h-2zM7 9h2v1h-2zM7 10h2v1h-2zM7 11h2v1h-2zM7 12h2v1h-2z"/><path fill="#a0a000" d="M9 2h1v1h-1zM9 3h1v1h-1zM9 4h1v1h-1zM9 5h1v1h-1zM9 6h1v1h-1zM9 7h1v1h-1zM9 8h1v1h-1zM9 9h1v1h-1zM9 10h1v1h-1zM9 11h1v1h-1zM9 12h1v1h-1z"/><path fill="#ff0000" d="M11 4h2v1h-2zM11 5h2v1h-2zM11 6h2v1h-2zM11 7h2v1h-2zM11 8h2v1h-2zM11 9h2v1h-2zM11 10h2v1h-2zM11 11h2v1h-2zM11 12h2v1h-2z"/><path fill="#c00000" d="M13 4h1v1h-1zM13 5h1v1h-1zM13 6h1v1h-1zM13 7h1v1h-1zM13 8h1v1h-1zM13 9h1v1h-1zM13 10h1v1h-1zM13 11h1v1h-1zM13 12h1v1h-1z"/><path fill="#0000ff" d="M2 7h4v1h-4zM2 8h4v1h-4zM2 9h4v1h-4zM2 10h4v1h-4zM2 11h4v1h-4zM2 12h4v1h-4z"/></svg>
<svg class="a" style="left:435px;top:47px" width="15" height="15" viewBox="0 0 15 15" shape-rendering="crispEdges"><path fill="#000000" d="M0 0h1v1h-1zM2 0h1v1h-1zM4 0h1v1h-1zM6 0h1v1h-1zM8 0h1v1h-1zM10 0h1v1h-1zM12 0h1v1h-1zM14 0h1v1h-1zM0 2h1v1h-1zM14 2h1v1h-1zM0 4h1v1h-1zM14 4h1v1h-1zM3 5h1v1h-1zM8 5h1v1h-1zM0 6h1v1h-1zM14 6h1v1h-1zM3 7h1v1h-1zM5 7h1v1h-1zM0 8h1v1h-1zM3 8h2v1h-2zM8 8h1v1h-1zM14 8h1v1h-1zM6 9h1v1h-1zM8 9h1v1h-1zM0 10h1v1h-1zM8 10h1v1h-1zM14 10h1v1h-1zM0 12h1v1h-1zM5 12h1v1h-1zM9 12h1v1h-1zM14 12h1v1h-1zM0 14h1v1h-1zM2 14h1v1h-1zM4 14h1v1h-1zM6 14h1v1h-1zM8 14h1v1h-1zM10 14h1v1h-1zM12 14h1v1h-1zM14 14h1v1h-1z"/><path fill="#ffffff" d="M1 1h13v1h-13zM1 2h4v1h-4zM11 2h3v1h-3zM1 3h4v1h-4zM12 3h2v1h-2zM1 4h3v1h-3zM5 4h1v1h-1zM12 4h2v1h-2zM1 5h2v1h-2zM6 5h1v1h-1zM12 5h2v1h-2zM1 6h1v1h-1zM6 6h1v1h-1zM8 6h1v1h-1zM11 6h3v1h-3zM1 7h2v1h-2zM6 7h1v1h-1zM8 7h1v1h-1zM10 7h1v1h-1zM12 7h2v1h-2zM1 8h2v1h-2zM6 8h2v1h-2zM10 8h4v1h-4zM1 9h3v1h-3zM7 9h1v1h-1zM9 9h5v1h-5zM1 10h4v1h-4zM9 10h5v1h-5zM1 11h5v1h-5zM9 11h5v1h-5zM1 12h4v1h-4zM10 12h4v1h-4zM1 13h1v1h-1zM3 13h2v1h-2zM10 13h4v1h-4z"/><path fill="#800000" d="M5 2h6v1h-6zM5 3h7v1h-7zM8 4h4v1h-4zM9 5h3v1h-3zM9 6h2v1h-2z"/><path fill="#800080" d="M4 4h1v1h-1zM6 4h2v1h-2zM4 5h1v1h-1zM3 6h2v1h-2zM4 7h1v1h-1zM9 7h1v1h-1zM11 7h1v1h-1zM5 8h1v1h-1zM9 8h1v1h-1zM5 9h1v1h-1zM5 10h1v1h-1zM6 11h1v1h-1zM8 11h1v1h-1zM6 12h3v1h-3zM2 13h1v1h-1zM5 13h2v1h-2zM8 13h2v1h-2z"/><path fill="#ffff00" d="M5 5h1v1h-1zM7 5h1v1h-1zM2 6h1v1h-1zM5 6h1v1h-1zM7 6h1v1h-1zM7 7h1v1h-1zM4 9h1v1h-1zM6 10h2v1h-2zM7 11h1v1h-1zM7 13h1v1h-1z"/></svg>
<svg class="a" style="left:463px;top:47px" width="17" height="13" viewBox="0 0 17 13" shape-rendering="crispEdges"><path fill="#808080" d="M3 0h1v1h-1zM0 1h1v1h-1zM3 1h1v1h-1zM6 1h1v1h-1zM1 2h1v1h-1zM3 2h1v1h-1zM5 2h1v1h-1zM0 4h2v1h-2zM6 4h1v1h-1zM3 5h1v1h-1zM5 5h1v1h-1zM1 6h1v1h-1zM3 6h1v1h-1zM6 6h1v1h-1zM3 7h1v1h-1zM7 7h1v1h-1zM3 8h1v1h-1zM8 8h1v1h-1zM9 9h1v1h-1z"/><path fill="#ffffff" d="M4 1h1v1h-1zM8 1h1v1h-1zM4 2h1v1h-1zM7 2h1v1h-1zM2 3h5v1h-5zM2 4h4v1h-4zM7 4h8v1h-8zM2 5h1v1h-1zM4 5h1v1h-1zM6 5h9v1h-9zM2 6h1v1h-1zM4 6h2v1h-2zM7 6h2v1h-2zM13 6h2v1h-2zM5 7h2v1h-2zM8 7h7v1h-7zM6 8h2v1h-2zM9 8h6v1h-6zM2 9h1v1h-1zM5 9h4v1h-4zM10 9h5v1h-5zM5 10h10v1h-10zM5 11h10v1h-10z"/><path fill="#000000" d="M7 3h8v1h-8zM15 4h1v1h-1zM15 5h1v1h-1zM9 6h4v1h-4zM15 6h1v1h-1zM15 7h1v1h-1zM15 8h1v1h-1zM4 9h1v1h-1zM15 9h1v1h-1zM4 10h1v1h-1zM15 10h1v1h-1zM4 11h1v1h-1zM15 11h1v1h-1zM5 12h10v1h-10z"/></svg>
<svg class="a" style="left:487px;top:49px" width="15" height="12" viewBox="0 0 15 12" shape-rendering="crispEdges"><path fill="#000000" d="M2 0h12v1h-12zM1 1h1v1h-1zM14 1h1v1h-1zM1 2h1v1h-1zM14 2h1v1h-1zM1 3h1v1h-1zM14 3h1v1h-1zM0 4h7v1h-7zM14 4h1v1h-1zM0 5h1v1h-1zM6 5h1v1h-1zM14 5h1v1h-1zM0 6h1v1h-1zM6 6h1v1h-1zM8 6h5v1h-5zM14 6h1v1h-1zM0 7h7v1h-7zM8 7h1v1h-1zM12 7h1v1h-1zM14 7h1v1h-1zM1 8h1v1h-1zM8 8h1v1h-1zM12 8h1v1h-1zM14 8h1v1h-1zM1 9h1v1h-1zM8 9h1v1h-1zM12 9h1v1h-1zM14 9h1v1h-1zM2 10h7v1h-7zM12 10h2v1h-2zM8 11h5v1h-5z"/><path fill="#ffffff" d="M2 1h3v1h-3zM6 1h3v1h-3zM10 1h4v1h-4zM2 2h1v1h-1zM12 2h2v1h-2zM3 3h3v1h-3zM7 3h3v1h-3zM11 3h3v1h-3zM7 4h2v1h-2zM10 4h3v1h-3zM7 5h7v1h-7zM7 6h1v1h-1zM13 6h1v1h-1zM10 7h1v1h-1zM13 7h1v1h-1zM2 8h3v1h-3zM6 8h2v1h-2zM9 8h1v1h-1zM11 8h1v1h-1zM2 9h1v1h-1zM4 9h3v1h-3zM10 9h1v1h-1zM13 9h1v1h-1zM9 10h1v1h-1zM11 10h1v1h-1z"/><path fill="#ffff00" d="M5 1h1v1h-1zM9 1h1v1h-1zM2 3h1v1h-1zM6 3h1v1h-1zM10 3h1v1h-1zM9 4h1v1h-1zM13 4h1v1h-1zM7 7h1v1h-1zM5 8h1v1h-1zM13 8h1v1h-1zM3 9h1v1h-1zM7 9h1v1h-1z"/><path fill="#808080" d="M3 2h9v1h-9z"/><path fill="#c0c0c0" d="M1 5h5v1h-5zM1 6h5v1h-5z"/><path fill="#00ffff" d="M9 7h1v1h-1zM11 7h1v1h-1zM10 8h1v1h-1zM9 9h1v1h-1zM11 9h1v1h-1zM10 10h1v1h-1z"/></svg>
<svg class="a" style="left:509px;top:48px" width="15" height="13" viewBox="0 0 15 13" shape-rendering="crispEdges"><path fill="#000000" d="M1 0h12v1h-12zM0 1h1v1h-1zM12 1h1v1h-1zM0 2h1v1h-1zM2 2h9v1h-9zM12 2h2v1h-2zM0 3h1v1h-1zM12 3h1v1h-1zM14 3h1v1h-1zM0 4h1v1h-1zM12 4h1v1h-1zM14 4h1v1h-1zM0 5h1v1h-1zM12 5h1v1h-1zM14 5h1v1h-1zM0 6h1v1h-1zM12 6h1v1h-1zM14 6h1v1h-1zM0 7h1v1h-1zM12 7h1v1h-1zM14 7h1v1h-1zM0 8h1v1h-1zM12 8h1v1h-1zM14 8h1v1h-1zM0 9h1v1h-1zM12 9h1v1h-1zM14 9h1v1h-1zM1 10h12v1h-12zM14 10h1v1h-1zM2 11h1v1h-1zM14 11h1v1h-1zM3 12h11v1h-11z"/><path fill="#ffff00" d="M1 1h1v1h-1zM5 1h1v1h-1zM9 1h1v1h-1zM11 1h1v1h-1zM11 2h1v1h-1zM1 3h1v1h-1zM5 3h1v1h-1zM9 3h1v1h-1zM11 4h1v1h-1zM1 5h1v1h-1zM5 5h1v1h-1zM9 5h1v1h-1zM11 6h1v1h-1zM1 7h1v1h-1zM5 7h1v1h-1zM9 7h1v1h-1zM11 8h1v1h-1zM1 9h1v1h-1zM3 9h1v1h-1zM5 9h1v1h-1zM7 9h1v1h-1zM9 9h1v1h-1zM11 9h1v1h-1z"/><path fill="#008080" d="M2 1h3v1h-3zM2 3h2v1h-2zM2 4h1v1h-1zM2 5h1v1h-1zM2 6h1v1h-1zM2 7h1v1h-1z"/><path fill="#ffffff" d="M6 1h3v1h-3zM10 1h1v1h-1zM1 2h1v1h-1zM4 3h1v1h-1zM6 3h3v1h-3zM10 3h2v1h-2zM13 3h1v1h-1zM1 4h1v1h-1zM3 4h3v1h-3zM7 4h1v1h-1zM9 4h1v1h-1zM13 4h1v1h-1zM3 5h2v1h-2zM6 5h3v1h-3zM10 5h2v1h-2zM13 5h1v1h-1zM1 6h1v1h-1zM3 6h3v1h-3zM7 6h1v1h-1zM9 6h1v1h-1zM13 6h1v1h-1zM3 7h2v1h-2zM6 7h3v1h-3zM10 7h2v1h-2zM13 7h1v1h-1zM1 8h5v1h-5zM7 8h1v1h-1zM9 8h1v1h-1zM13 8h1v1h-1zM2 9h1v1h-1zM4 9h1v1h-1zM6 9h1v1h-1zM8 9h1v1h-1zM10 9h1v1h-1zM13 9h1v1h-1zM13 10h1v1h-1zM3 11h11v1h-11z"/><path fill="#808080" d="M6 4h1v1h-1zM8 4h1v1h-1zM10 4h1v1h-1zM6 6h1v1h-1zM8 6h1v1h-1zM10 6h1v1h-1zM6 8h1v1h-1zM8 8h1v1h-1zM10 8h1v1h-1z"/></svg>
<svg class="a" style="left:533px;top:49px" width="14" height="12" viewBox="0 0 14 12" shape-rendering="crispEdges"><path fill="#000080" d="M0 0h11v1h-11zM0 1h10v1h-10zM0 2h9v1h-9z"/><path fill="#ffffff" d="M11 0h1v1h-1zM10 1h1v1h-1zM12 1h1v1h-1zM9 2h1v1h-1zM11 2h1v1h-1zM8 3h1v1h-1zM10 3h4v1h-4zM7 4h1v1h-1zM9 4h5v1h-5zM6 5h1v1h-1zM8 5h6v1h-6zM5 6h1v1h-1zM7 6h1v1h-1zM4 7h1v1h-1zM6 7h1v1h-1zM3 8h1v1h-1zM5 8h1v1h-1zM2 9h1v1h-1zM4 9h1v1h-1zM1 10h1v1h-1zM3 10h1v1h-1zM0 11h1v1h-1zM2 11h1v1h-1z"/><path fill="#c0c0c0" d="M11 1h1v1h-1zM10 2h1v1h-1zM9 3h1v1h-1zM8 4h1v1h-1zM7 5h1v1h-1zM6 6h1v1h-1zM5 7h1v1h-1zM4 8h1v1h-1zM3 9h1v1h-1zM2 10h1v1h-1zM1 11h1v1h-1z"/><path fill="#008000" d="M0 3h8v1h-8zM0 4h7v1h-7zM0 5h6v1h-6z"/><path fill="#800000" d="M0 6h5v1h-5zM0 7h4v1h-4zM0 8h3v1h-3z"/><path fill="#808080" d="M8 6h6v1h-6zM7 7h7v1h-7zM6 8h8v1h-8z"/><path fill="#000000" d="M5 9h9v1h-9zM4 10h10v1h-10zM4 11h10v1h-10z"/></svg>
<svg class="a" style="left:619px;top:47px" width="13" height="16" viewBox="0 0 13 16" shape-rendering="crispEdges"><path fill="#000000" d="M1 0h11v1h-11zM0 1h1v1h-1zM12 1h1v1h-1zM0 2h1v1h-1zM12 2h1v1h-1zM0 3h1v1h-1zM12 3h1v1h-1zM0 4h1v1h-1zM12 4h1v1h-1zM0 5h1v1h-1zM12 5h1v1h-1zM0 6h1v1h-1zM12 6h1v1h-1zM0 7h1v1h-1zM12 7h1v1h-1zM0 8h1v1h-1zM12 8h1v1h-1zM0 9h1v1h-1zM12 9h1v1h-1zM0 10h1v1h-1zM12 10h1v1h-1zM0 11h1v1h-1zM12 11h1v1h-1zM1 12h7v1h-7zM10 12h2v1h-2zM8 13h1v1h-1zM10 13h1v1h-1zM9 14h2v1h-2zM10 15h1v1h-1z"/><path fill="#ffffff" d="M1 1h3v1h-3zM5 1h3v1h-3zM9 1h3v1h-3zM1 2h1v1h-1zM3 2h3v1h-3zM7 2h3v1h-3zM11 2h1v1h-1zM1 3h3v1h-3zM9 3h3v1h-3zM1 4h1v1h-1zM5 4h1v1h-1zM7 4h1v1h-1zM11 4h1v1h-1zM1 5h2v1h-2zM5 5h3v1h-3zM10 5h2v1h-2zM1 6h1v1h-1zM3 6h3v1h-3zM9 6h1v1h-1zM11 6h1v1h-1zM1 7h3v1h-3zM5 7h1v1h-1zM8 7h4v1h-4zM1 8h1v1h-1zM3 8h3v1h-3zM8 8h2v1h-2zM11 8h1v1h-1zM1 9h3v1h-3zM5 9h3v1h-3zM9 9h3v1h-3zM1 10h1v1h-1zM3 10h3v1h-3zM8 10h2v1h-2zM11 10h1v1h-1zM1 11h3v1h-3zM5 11h3v1h-3zM9 11h3v1h-3zM8 12h1v1h-1z"/><path fill="#ffff00" d="M4 1h1v1h-1zM8 1h1v1h-1zM2 2h1v1h-1zM6 2h1v1h-1zM10 2h1v1h-1zM2 4h1v1h-1zM6 4h1v1h-1zM10 4h1v1h-1zM2 6h1v1h-1zM6 6h1v1h-1zM10 6h1v1h-1zM4 7h1v1h-1zM2 8h1v1h-1zM10 8h1v1h-1zM4 9h1v1h-1zM8 9h1v1h-1zM2 10h1v1h-1zM10 10h1v1h-1zM4 11h1v1h-1zM8 11h1v1h-1zM9 12h1v1h-1zM9 13h1v1h-1z"/><path fill="#000080" d="M4 3h5v1h-5zM3 4h2v1h-2zM8 4h2v1h-2zM3 5h2v1h-2zM8 5h2v1h-2zM7 6h2v1h-2zM6 7h2v1h-2zM6 8h2v1h-2zM6 10h2v1h-2z"/></svg>
<svg class="a" style="left:185px;top:79px" width="5" height="3" viewBox="0 0 5 3" shape-rendering="crispEdges"><path fill="#000000" d="M0 0h5v1h-5zM1 1h3v1h-3zM2 2h1v1h-1z"/></svg>
<svg class="a" style="left:240px;top:79px" width="5" height="3" viewBox="0 0 5 3" shape-rendering="crispEdges"><path fill="#000000" d="M0 0h5v1h-5zM1 1h3v1h-3zM2 2h1v1h-1z"/></svg>
<svg class="a" style="left:598px;top:54px" width="5" height="3" viewBox="0 0 5 3" shape-rendering="crispEdges"><path fill="#000000" d="M0 0h5v1h-5zM1 1h3v1h-3zM2 2h1v1h-1z"/></svg>
<svg class="a" style="left:262px;top:76px" width="9" height="9" viewBox="0 0 9 9" shape-rendering="crispEdges"><path fill="#000000" d="M0 0h8v1h-8zM1 1h3v1h-3zM6 1h3v1h-3zM1 2h3v1h-3zM6 2h3v1h-3zM1 3h3v1h-3zM6 3h3v1h-3zM1 4h7v1h-7zM1 5h3v1h-3zM6 5h3v1h-3zM1 6h3v1h-3zM6 6h3v1h-3zM1 7h3v1h-3zM6 7h3v1h-3zM0 8h8v1h-8z"/></svg>
<svg class="a" style="left:285px;top:76px" width="9" height="9" viewBox="0 0 9 9" shape-rendering="crispEdges"><path fill="#000000" d="M4 0h5v1h-5zM5 1h3v1h-3zM5 2h2v1h-2zM4 3h3v1h-3zM4 4h2v1h-2zM3 5h3v1h-3zM3 6h2v1h-2zM2 7h3v1h-3zM0 8h5v1h-5z"/></svg>
<svg class="a" style="left:308px;top:76px" width="9" height="11" viewBox="0 0 9 11" shape-rendering="crispEdges"><path fill="#000000" d="M0 0h4v1h-4zM5 0h4v1h-4zM1 1h2v1h-2zM6 1h2v1h-2zM1 2h2v1h-2zM6 2h2v1h-2zM1 3h2v1h-2zM6 3h2v1h-2zM1 4h2v1h-2zM6 4h2v1h-2zM1 5h2v1h-2zM6 5h2v1h-2zM1 6h2v1h-2zM6 6h2v1h-2zM2 7h2v1h-2zM5 7h2v1h-2zM3 8h3v1h-3zM0 10h9v1h-9z"/></svg>
<svg class="a" style="left:332px;top:75px" width="8" height="10" viewBox="0 0 8 10" shape-rendering="crispEdges"><path fill="#808080" d="M1 0h5v1h-5zM0 1h2v1h-2zM0 2h2v1h-2zM3 2h3v1h-3zM0 3h1v1h-1zM4 3h3v1h-3zM1 4h1v1h-1zM3 5h2v1h-2zM1 6h2v1h-2zM5 6h1v1h-1zM0 7h2v1h-2zM3 7h1v1h-1zM5 7h1v1h-1zM0 8h1v1h-1zM7 8h1v1h-1z"/><path fill="#000000" d="M2 1h6v1h-6zM2 2h1v1h-1zM6 2h2v1h-2zM1 3h2v1h-2zM2 4h4v1h-4zM5 5h2v1h-2zM6 6h2v1h-2zM2 7h1v1h-1zM6 7h2v1h-2zM1 8h6v1h-6zM1 9h6v1h-6z"/></svg>
<svg class="a" style="left:358px;top:76px" width="14" height="1" viewBox="0 0 14 1" shape-rendering="crispEdges"><path fill="#000000" d="M0 0h14v1h-14z"/></svg>
<svg class="a" style="left:358px;top:78px" width="10" height="1" viewBox="0 0 10 1" shape-rendering="crispEdges"><path fill="#000000" d="M0 0h10v1h-10z"/></svg>
<svg class="a" style="left:358px;top:80px" width="14" height="1" viewBox="0 0 14 1" shape-rendering="crispEdges"><path fill="#000000" d="M0 0h14v1h-14z"/></svg>
<svg class="a" style="left:358px;top:82px" width="10" height="1" viewBox="0 0 10 1" shape-rendering="crispEdges"><path fill="#000000" d="M0 0h10v1h-10z"/></svg>
<svg class="a" style="left:358px;top:84px" width="14" height="1" viewBox="0 0 14 1" shape-rendering="crispEdges"><path fill="#000000" d="M0 0h14v1h-14z"/></svg>
<svg class="a" style="left:358px;top:86px" width="10" height="1" viewBox="0 0 10 1" shape-rendering="crispEdges"><path fill="#000000" d="M0 0h10v1h-10z"/></svg>
<svg class="a" style="left:380px;top:75px" width="14" height="1" viewBox="0 0 14 1" shape-rendering="crispEdges"><path fill="#000000" d="M0 0h14v1h-14z"/></svg>
<svg class="a" style="left:382px;top:77px" width="10" height="1" viewBox="0 0 10 1" shape-rendering="crispEdges"><path fill="#000000" d="M0 0h10v1h-10z"/></svg>
<svg class="a" style="left:380px;top:79px" width="14" height="1" viewBox="0 0 14 1" shape-rendering="crispEdges"><path fill="#000000" d="M0 0h14v1h-14z"/></svg>
<svg class="a" style="left:382px;top:81px" width="10" height="1" viewBox="0 0 10 1" shape-rendering="crispEdges"><path fill="#000000" d="M0 0h10v1h-10z"/></svg>
<svg class="a" style="left:380px;top:83px" width="14" height="1" viewBox="0 0 14 1" shape-rendering="crispEdges"><path fill="#000000" d="M0 0h14v1h-14z"/></svg>
<svg class="a" style="left:382px;top:85px" width="10" height="1" viewBox="0 0 10 1" shape-rendering="crispEdges"><path fill="#000000" d="M0 0h10v1h-10z"/></svg>
<svg class="a" style="left:403px;top:75px" width="15" height="1" viewBox="0 0 15 1" shape-rendering="crispEdges"><path fill="#000000" d="M0 0h15v1h-15z"/></svg>
<svg class="a" style="left:407px;top:77px" width="11" height="1" viewBox="0 0 11 1" shape-rendering="crispEdges"><path fill="#000000" d="M0 0h11v1h-11z"/></svg>
<svg class="a" style="left:403px;top:79px" width="15" height="1" viewBox="0 0 15 1" shape-rendering="crispEdges"><path fill="#000000" d="M0 0h15v1h-15z"/></svg>
<svg class="a" style="left:407px;top:81px" width="11" height="1" viewBox="0 0 11 1" shape-rendering="crispEdges"><path fill="#000000" d="M0 0h11v1h-11z"/></svg>
<svg class="a" style="left:403px;top:83px" width="15" height="1" viewBox="0 0 15 1" shape-rendering="crispEdges"><path fill="#000000" d="M0 0h15v1h-15z"/></svg>
<svg class="a" style="left:407px;top:85px" width="11" height="1" viewBox="0 0 11 1" shape-rendering="crispEdges"><path fill="#000000" d="M0 0h11v1h-11z"/></svg>
<svg class="a" style="left:433px;top:76px" width="14" height="12" viewBox="0 0 14 12" shape-rendering="crispEdges"><path fill="#ffffff" d="M0 0h2v1h-2zM5 0h9v1h-9zM0 1h2v1h-2zM0 5h2v1h-2zM5 5h9v1h-9zM0 6h2v1h-2zM0 10h2v1h-2zM5 10h9v1h-9zM0 11h2v1h-2z"/></svg>
<svg class="a" style="left:432px;top:75px" width="14" height="12" viewBox="0 0 14 12" shape-rendering="crispEdges"><path fill="#808080" d="M0 0h2v1h-2zM5 0h9v1h-9zM0 1h2v1h-2zM0 5h2v1h-2zM5 5h9v1h-9zM0 6h2v1h-2zM0 10h2v1h-2zM5 10h9v1h-9zM0 11h2v1h-2z"/></svg>
<svg class="a" style="left:462px;top:74px" width="15" height="14" viewBox="0 0 15 14" shape-rendering="crispEdges"><path fill="#ffffff" d="M2 0h1v1h-1zM8 0h7v1h-7zM1 1h3v1h-3zM0 2h5v1h-5zM6 2h9v1h-9zM2 3h1v1h-1zM2 4h1v1h-1zM6 4h9v1h-9zM2 5h1v1h-1zM2 8h1v1h-1zM8 8h7v1h-7zM2 9h1v1h-1zM2 10h1v1h-1zM6 10h9v1h-9zM0 11h5v1h-5zM1 12h3v1h-3zM6 12h9v1h-9zM2 13h1v1h-1z"/></svg>
<svg class="a" style="left:461px;top:73px" width="15" height="14" viewBox="0 0 15 14" shape-rendering="crispEdges"><path fill="#808080" d="M2 0h1v1h-1zM8 0h7v1h-7zM1 1h3v1h-3zM0 2h5v1h-5zM6 2h9v1h-9zM2 3h1v1h-1zM2 4h1v1h-1zM6 4h9v1h-9zM2 5h1v1h-1zM2 8h1v1h-1zM8 8h7v1h-7zM2 9h1v1h-1zM2 10h1v1h-1zM6 10h9v1h-9zM0 11h5v1h-5zM1 12h3v1h-3zM6 12h9v1h-9zM2 13h1v1h-1z"/></svg>
<svg class="a" style="left:485px;top:74px" width="15" height="14" viewBox="0 0 15 14" shape-rendering="crispEdges"><path fill="#ffffff" d="M2 0h1v1h-1zM8 0h7v1h-7zM2 1h1v1h-1zM2 2h1v1h-1zM6 2h9v1h-9zM0 3h5v1h-5zM1 4h3v1h-3zM6 4h9v1h-9zM2 5h1v1h-1zM2 8h1v1h-1zM8 8h7v1h-7zM1 9h3v1h-3zM0 10h5v1h-5zM6 10h9v1h-9zM2 11h1v1h-1zM2 12h1v1h-1zM6 12h9v1h-9zM2 13h1v1h-1z"/></svg>
<svg class="a" style="left:484px;top:73px" width="15" height="14" viewBox="0 0 15 14" shape-rendering="crispEdges"><path fill="#808080" d="M2 0h1v1h-1zM8 0h7v1h-7zM2 1h1v1h-1zM2 2h1v1h-1zM6 2h9v1h-9zM0 3h5v1h-5zM1 4h3v1h-3zM6 4h9v1h-9zM2 5h1v1h-1zM2 8h1v1h-1zM8 8h7v1h-7zM1 9h3v1h-3zM0 10h5v1h-5zM6 10h9v1h-9zM2 11h1v1h-1zM2 12h1v1h-1zM6 12h9v1h-9zM2 13h1v1h-1z"/></svg>
<svg class="a" style="left:513px;top:73px" width="16" height="15" viewBox="0 0 16 15" shape-rendering="crispEdges"><path fill="#000000" d="M11 0h5v1h-5zM7 1h2v1h-2zM12 1h3v1h-3zM6 2h3v1h-3zM13 2h1v1h-1zM6 3h4v1h-4zM5 4h2v1h-2zM8 4h2v1h-2zM5 5h2v1h-2zM8 5h3v1h-3zM4 6h2v1h-2zM9 6h2v1h-2zM4 7h2v1h-2zM9 7h3v1h-3zM3 8h2v1h-2zM10 8h2v1h-2zM3 9h10v1h-10zM2 10h2v1h-2zM11 10h2v1h-2zM2 11h2v1h-2zM11 11h3v1h-3zM1 12h2v1h-2zM12 12h2v1h-2zM0 13h5v1h-5zM10 13h6v1h-6zM0 14h5v1h-5zM10 14h6v1h-6z"/></svg>
<svg class="a" style="left:540px;top:73px" width="12" height="11" viewBox="0 0 12 11" shape-rendering="crispEdges"><path fill="#000000" d="M7 0h5v1h-5zM8 1h3v1h-3zM9 2h1v1h-1zM3 4h1v1h-1zM2 5h3v1h-3zM2 6h1v1h-1zM4 6h2v1h-2zM1 7h5v1h-5zM1 8h1v1h-1zM5 8h2v1h-2zM0 9h3v1h-3zM4 9h4v1h-4zM0 10h3v1h-3zM4 10h4v1h-4z"/></svg>
<svg class="a" style="left:568px;top:76px" width="10" height="11" viewBox="0 0 10 11" shape-rendering="crispEdges"><path fill="#ffffff" d="M5 0h1v1h-1zM4 1h2v1h-2zM3 2h1v1h-1zM5 2h1v1h-1zM2 3h1v1h-1zM5 3h5v1h-5zM1 4h1v1h-1zM9 4h1v1h-1zM0 5h1v1h-1zM9 5h1v1h-1zM1 6h1v1h-1zM9 6h1v1h-1zM2 7h1v1h-1zM5 7h5v1h-5zM3 8h1v1h-1zM5 8h1v1h-1zM4 9h2v1h-2zM5 10h1v1h-1z"/></svg>
<svg class="a" style="left:567px;top:75px" width="10" height="11" viewBox="0 0 10 11" shape-rendering="crispEdges"><path fill="#808080" d="M5 0h1v1h-1zM4 1h2v1h-2zM3 2h1v1h-1zM5 2h1v1h-1zM2 3h1v1h-1zM5 3h5v1h-5zM1 4h1v1h-1zM9 4h1v1h-1zM0 5h1v1h-1zM9 5h1v1h-1zM1 6h1v1h-1zM9 6h1v1h-1zM2 7h1v1h-1zM5 7h5v1h-5zM3 8h1v1h-1zM5 8h1v1h-1zM4 9h2v1h-2zM5 10h1v1h-1z"/></svg>
<svg class="a" style="left:592px;top:76px" width="10" height="11" viewBox="0 0 10 11" shape-rendering="crispEdges"><path fill="#ffffff" d="M4 0h1v1h-1zM4 1h2v1h-2zM4 2h1v1h-1zM6 2h1v1h-1zM0 3h5v1h-5zM7 3h1v1h-1zM0 4h1v1h-1zM8 4h1v1h-1zM0 5h1v1h-1zM9 5h1v1h-1zM0 6h1v1h-1zM8 6h1v1h-1zM0 7h5v1h-5zM7 7h1v1h-1zM4 8h1v1h-1zM6 8h1v1h-1zM4 9h2v1h-2zM4 10h1v1h-1z"/></svg>
<svg class="a" style="left:591px;top:75px" width="10" height="11" viewBox="0 0 10 11" shape-rendering="crispEdges"><path fill="#808080" d="M4 0h1v1h-1zM4 1h2v1h-2zM4 2h1v1h-1zM6 2h1v1h-1zM0 3h5v1h-5zM7 3h1v1h-1zM0 4h1v1h-1zM8 4h1v1h-1zM0 5h1v1h-1zM9 5h1v1h-1zM0 6h1v1h-1zM8 6h1v1h-1zM0 7h5v1h-5zM7 7h1v1h-1zM4 8h1v1h-1zM6 8h1v1h-1zM4 9h2v1h-2zM4 10h1v1h-1z"/></svg>
<svg class="a" style="left:617px;top:74px" width="17" height="13" viewBox="0 0 17 13" shape-rendering="crispEdges"><path fill="#000000" d="M9 0h1v1h-1zM9 1h1v1h-1zM0 2h5v1h-5zM8 2h1v1h-1zM10 2h1v1h-1zM7 3h2v1h-2zM10 3h1v1h-1zM0 4h2v1h-2zM7 4h1v1h-1zM11 4h1v1h-1zM3 5h5v1h-5zM11 5h5v1h-5zM0 6h2v1h-2zM4 6h1v1h-1zM14 6h1v1h-1zM5 7h1v1h-1zM13 7h1v1h-1zM0 8h4v1h-4zM6 8h1v1h-1zM12 8h1v1h-1zM6 9h1v1h-1zM9 9h1v1h-1zM12 9h1v1h-1zM0 10h4v1h-4zM5 10h1v1h-1zM8 10h1v1h-1zM10 10h1v1h-1zM13 10h1v1h-1zM5 11h1v1h-1zM7 11h1v1h-1zM11 11h1v1h-1zM13 11h1v1h-1zM5 12h2v1h-2zM12 12h2v1h-2z"/><path fill="#ffff00" d="M9 2h1v1h-1zM9 3h1v1h-1zM8 4h3v1h-3zM8 5h3v1h-3zM5 6h9v1h-9zM6 7h7v1h-7zM7 8h5v1h-5zM7 9h2v1h-2zM10 9h2v1h-2zM6 10h2v1h-2zM11 10h2v1h-2zM6 11h1v1h-1zM12 11h1v1h-1z"/></svg>
<svg class="a" style="left:2px;top:709px" width="11" height="10" viewBox="0 0 11 10" shape-rendering="crispEdges"><path fill="#000000" d="M1 0h9v1h-9zM0 1h1v1h-1zM10 1h1v1h-1zM0 2h1v1h-1zM3 2h5v1h-5zM10 2h1v1h-1zM0 3h1v1h-1zM10 3h1v1h-1zM0 4h1v1h-1zM10 4h1v1h-1zM0 5h1v1h-1zM10 5h1v1h-1zM0 6h1v1h-1zM10 6h1v1h-1zM0 7h1v1h-1zM10 7h1v1h-1zM0 8h1v1h-1zM10 8h1v1h-1zM1 9h9v1h-9z"/><path fill="#ffffff" d="M1 1h9v1h-9zM1 2h2v1h-2zM8 2h2v1h-2zM1 3h9v1h-9zM1 4h9v1h-9zM1 5h9v1h-9zM1 6h9v1h-9zM1 7h9v1h-9zM1 8h9v1h-9z"/></svg>
<svg class="a" style="left:19px;top:709px" width="11" height="9" viewBox="0 0 11 9" shape-rendering="crispEdges"><path fill="#000000" d="M0 0h11v1h-11zM3 2h8v1h-8zM3 4h8v1h-8zM3 6h8v1h-8zM0 8h11v1h-11z"/></svg>
<svg class="a" style="left:36px;top:709px" width="11" height="10" viewBox="0 0 11 10" shape-rendering="crispEdges"><path fill="#000000" d="M0 0h5v1h-5zM6 0h5v1h-5zM0 1h1v1h-1zM4 1h1v1h-1zM6 1h1v1h-1zM10 1h1v1h-1zM0 2h1v1h-1zM4 2h1v1h-1zM6 2h1v1h-1zM10 2h1v1h-1zM0 3h5v1h-5zM6 3h5v1h-5zM0 6h5v1h-5zM6 6h5v1h-5zM0 7h1v1h-1zM4 7h1v1h-1zM6 7h1v1h-1zM10 7h1v1h-1zM0 8h1v1h-1zM4 8h1v1h-1zM6 8h1v1h-1zM10 8h1v1h-1zM0 9h5v1h-5zM6 9h5v1h-5z"/><path fill="#ffffff" d="M1 1h3v1h-3zM7 1h3v1h-3zM1 2h3v1h-3zM7 2h3v1h-3zM1 7h3v1h-3zM7 7h3v1h-3zM1 8h3v1h-3zM7 8h3v1h-3z"/></svg>
<svg class="a" style="left:53px;top:709px" width="11" height="9" viewBox="0 0 11 9" shape-rendering="crispEdges"><path fill="#000000" d="M2 0h8v1h-8zM2 1h1v1h-1zM9 1h1v1h-1zM2 2h1v1h-1zM9 2h1v1h-1zM2 3h1v1h-1zM9 3h1v1h-1zM2 4h8v1h-8zM0 6h11v1h-11zM0 8h11v1h-11z"/><path fill="#ffffff" d="M3 1h6v1h-6zM3 2h6v1h-6zM3 3h6v1h-6z"/></svg>
<svg class="a" style="left:70px;top:709px" width="12" height="10" viewBox="0 0 12 10" shape-rendering="crispEdges"><path fill="#000000" d="M0 0h12v1h-12zM1 1h10v1h-10zM1 2h1v1h-1zM10 2h1v1h-1zM1 3h1v1h-1zM3 3h5v1h-5zM10 3h1v1h-1zM1 4h1v1h-1zM10 4h1v1h-1zM1 5h10v1h-10zM5 6h2v1h-2zM5 7h2v1h-2zM5 8h2v1h-2zM3 9h6v1h-6z"/><path fill="#ffffff" d="M2 2h8v1h-8zM2 3h1v1h-1zM8 3h2v1h-2zM2 4h8v1h-8z"/></svg>
<svg class="a" style="left:47px;top:733px" width="5" height="3" viewBox="0 0 5 3" shape-rendering="crispEdges"><path fill="#000000" d="M0 0h5v1h-5zM1 1h3v1h-3zM2 2h1v1h-1z"/></svg>
<svg class="a" style="left:179px;top:733px" width="5" height="3" viewBox="0 0 5 3" shape-rendering="crispEdges"><path fill="#000000" d="M0 0h5v1h-5zM1 1h3v1h-3zM2 2h1v1h-1z"/></svg>
<svg class="a" style="left:358px;top:733px" width="5" height="3" viewBox="0 0 5 3" shape-rendering="crispEdges"><path fill="#000000" d="M0 0h5v1h-5zM1 1h3v1h-3zM2 2h1v1h-1z"/></svg>
<svg class="a" style="left:392px;top:733px" width="5" height="3" viewBox="0 0 5 3" shape-rendering="crispEdges"><path fill="#000000" d="M0 0h5v1h-5zM1 1h3v1h-3zM2 2h1v1h-1z"/></svg>
<svg class="a" style="left:426px;top:733px" width="5" height="3" viewBox="0 0 5 3" shape-rendering="crispEdges"><path fill="#000000" d="M0 0h5v1h-5zM1 1h3v1h-3zM2 2h1v1h-1z"/></svg>
<svg class="a" style="left:65px;top:727px" width="9" height="15" viewBox="0 0 9 15" shape-rendering="crispEdges"><path fill="#000000" d="M0 0h1v1h-1zM0 1h2v1h-2zM0 2h1v1h-1zM2 2h1v1h-1zM0 3h1v1h-1zM3 3h1v1h-1zM0 4h1v1h-1zM4 4h1v1h-1zM0 5h1v1h-1zM5 5h1v1h-1zM0 6h1v1h-1zM6 6h1v1h-1zM0 7h1v1h-1zM7 7h1v1h-1zM0 8h1v1h-1zM4 8h5v1h-5zM0 9h1v1h-1zM3 9h1v1h-1zM5 9h1v1h-1zM0 10h1v1h-1zM2 10h1v1h-1zM4 10h1v1h-1zM6 10h1v1h-1zM0 11h2v1h-2zM4 11h1v1h-1zM6 11h1v1h-1zM0 12h1v1h-1zM5 12h1v1h-1zM7 12h1v1h-1zM5 13h1v1h-1zM7 13h1v1h-1zM6 14h2v1h-2z"/><path fill="#ffffff" d="M1 2h1v1h-1zM1 3h2v1h-2zM1 4h3v1h-3zM1 5h4v1h-4zM1 6h5v1h-5zM1 7h6v1h-6zM1 8h3v1h-3zM1 9h2v1h-2zM4 9h1v1h-1zM1 10h1v1h-1zM5 10h1v1h-1zM5 11h1v1h-1zM6 12h1v1h-1zM6 13h1v1h-1z"/></svg>
<svg class="a" style="left:85px;top:727px" width="14" height="15" viewBox="0 0 14 15" shape-rendering="crispEdges"><path fill="#ffffff" d="M5 0h1v1h-1zM5 1h2v1h-2zM3 2h5v1h-5zM2 3h5v1h-5zM1 4h2v1h-2zM6 4h1v1h-1zM10 4h2v1h-2zM0 5h2v1h-2zM0 6h2v1h-2zM11 6h2v1h-2zM0 7h2v1h-2zM5 7h3v1h-3zM0 8h2v1h-2zM5 8h4v1h-4zM11 8h2v1h-2zM0 9h2v1h-2zM5 9h4v1h-4zM11 9h2v1h-2zM0 10h2v1h-2zM6 10h2v1h-2zM11 10h2v1h-2zM0 11h2v1h-2zM10 11h2v1h-2zM1 12h2v1h-2zM9 12h3v1h-3zM2 13h9v1h-9zM3 14h7v1h-7z"/></svg>
<svg class="a" style="left:84px;top:726px" width="14" height="15" viewBox="0 0 14 15" shape-rendering="crispEdges"><path fill="#808080" d="M5 0h1v1h-1zM5 1h2v1h-2zM3 2h5v1h-5zM2 3h5v1h-5zM1 4h2v1h-2zM6 4h1v1h-1zM10 4h2v1h-2zM0 5h2v1h-2zM0 6h2v1h-2zM11 6h2v1h-2zM0 7h2v1h-2zM5 7h3v1h-3zM0 8h2v1h-2zM5 8h4v1h-4zM11 8h2v1h-2zM0 9h2v1h-2zM5 9h4v1h-4zM11 9h2v1h-2zM0 10h2v1h-2zM6 10h2v1h-2zM11 10h2v1h-2zM0 11h2v1h-2zM10 11h2v1h-2zM1 12h2v1h-2zM9 12h3v1h-3zM2 13h9v1h-9zM3 14h7v1h-7z"/></svg>
<svg class="a" style="left:1014px;top:100px" width="7" height="4" viewBox="0 0 7 4" shape-rendering="crispEdges"><path fill="#ffffff" d="M3 0h1v1h-1zM2 1h3v1h-3zM1 2h5v1h-5zM0 3h7v1h-7z"/></svg>
<svg class="a" style="left:1013px;top:99px" width="7" height="4" viewBox="0 0 7 4" shape-rendering="crispEdges"><path fill="#808080" d="M3 0h1v1h-1zM2 1h3v1h-3zM1 2h5v1h-5zM0 3h7v1h-7z"/></svg>
<svg class="a" style="left:1014px;top:665px" width="7" height="4" viewBox="0 0 7 4" shape-rendering="crispEdges"><path fill="#ffffff" d="M0 0h7v1h-7zM1 1h5v1h-5zM2 2h3v1h-3zM3 3h1v1h-1z"/></svg>
<svg class="a" style="left:1013px;top:664px" width="7" height="4" viewBox="0 0 7 4" shape-rendering="crispEdges"><path fill="#808080" d="M0 0h7v1h-7zM1 1h5v1h-5zM2 2h3v1h-3zM3 3h1v1h-1z"/></svg>
<svg class="a" style="left:91px;top:711px" width="4" height="7" viewBox="0 0 4 7" shape-rendering="crispEdges"><path fill="#ffffff" d="M3 0h1v1h-1zM2 1h2v1h-2zM1 2h3v1h-3zM0 3h4v1h-4zM1 4h3v1h-3zM2 5h2v1h-2zM3 6h1v1h-1z"/></svg>
<svg class="a" style="left:90px;top:710px" width="4" height="7" viewBox="0 0 4 7" shape-rendering="crispEdges"><path fill="#808080" d="M3 0h1v1h-1zM2 1h2v1h-2zM1 2h3v1h-3zM0 3h4v1h-4zM1 4h3v1h-3zM2 5h2v1h-2zM3 6h1v1h-1z"/></svg>
<svg class="a" style="left:1001px;top:711px" width="4" height="7" viewBox="0 0 4 7" shape-rendering="crispEdges"><path fill="#ffffff" d="M0 0h1v1h-1zM0 1h2v1h-2zM0 2h3v1h-3zM0 3h4v1h-4zM0 4h3v1h-3zM0 5h2v1h-2zM0 6h1v1h-1z"/></svg>
<svg class="a" style="left:1000px;top:710px" width="4" height="7" viewBox="0 0 4 7" shape-rendering="crispEdges"><path fill="#808080" d="M0 0h1v1h-1zM0 1h2v1h-2zM0 2h3v1h-3zM0 3h4v1h-4zM0 4h3v1h-3zM0 5h2v1h-2zM0 6h1v1h-1z"/></svg>
<svg class="a" style="left:1013px;top:678px" width="7" height="4" viewBox="0 0 7 4" shape-rendering="crispEdges"><path fill="#000000" d="M3 0h1v1h-1zM2 1h3v1h-3zM1 2h5v1h-5zM0 3h7v1h-7z"/></svg>
<svg class="a" style="left:1013px;top:683px" width="7" height="4" viewBox="0 0 7 4" shape-rendering="crispEdges"><path fill="#000000" d="M3 0h1v1h-1zM2 1h3v1h-3zM1 2h5v1h-5zM0 3h7v1h-7z"/></svg>
<svg class="a" style="left:1013px;top:694px" width="7" height="4" viewBox="0 0 7 4" shape-rendering="crispEdges"><path fill="#000000" d="M0 0h7v1h-7zM1 1h5v1h-5zM2 2h3v1h-3zM3 3h1v1h-1z"/></svg>
<svg class="a" style="left:1013px;top:699px" width="7" height="4" viewBox="0 0 7 4" shape-rendering="crispEdges"><path fill="#000000" d="M0 0h7v1h-7zM1 1h5v1h-5zM2 2h3v1h-3zM3 3h1v1h-1z"/></svg>
<svg class="a" style="left:194px;top:728px" width="11" height="11" viewBox="0 0 11 11" shape-rendering="crispEdges"><path fill="#000000" d="M0 0h1v1h-1zM1 1h1v1h-1zM2 2h1v1h-1zM3 3h1v1h-1zM4 4h1v1h-1zM5 5h1v1h-1zM6 6h1v1h-1zM7 7h1v1h-1zM8 8h1v1h-1zM9 9h1v1h-1zM10 10h1v1h-1z"/></svg>
<svg class="a" style="left:218px;top:728px" width="11" height="11" viewBox="0 0 11 11" shape-rendering="crispEdges"><path fill="#000000" d="M0 0h1v1h-1zM1 1h1v1h-1zM2 2h1v1h-1zM3 3h1v1h-1zM4 4h1v1h-1zM7 4h1v1h-1zM5 5h3v1h-3zM5 6h4v1h-4zM4 7h5v1h-5zM6 8h4v1h-4zM7 9h3v1h-3zM9 10h2v1h-2z"/></svg>
<svg class="a" style="left:238px;top:727px" width="16" height="13" viewBox="0 0 16 13" shape-rendering="crispEdges"><path fill="#000000" d="M0 0h16v1h-16zM0 1h1v1h-1zM15 1h1v1h-1zM0 2h1v1h-1zM15 2h1v1h-1zM0 3h1v1h-1zM15 3h1v1h-1zM0 4h1v1h-1zM15 4h1v1h-1zM0 5h1v1h-1zM15 5h1v1h-1zM0 6h1v1h-1zM15 6h1v1h-1zM0 7h1v1h-1zM15 7h1v1h-1zM0 8h1v1h-1zM15 8h1v1h-1zM0 9h1v1h-1zM15 9h1v1h-1zM0 10h1v1h-1zM15 10h1v1h-1zM0 11h1v1h-1zM15 11h1v1h-1zM0 12h16v1h-16z"/></svg>
<svg class="a" style="left:261px;top:727px" width="16" height="12" viewBox="0 0 16 12" shape-rendering="crispEdges"><path fill="#000000" d="M5 0h6v1h-6zM3 1h2v1h-2zM11 1h2v1h-2zM2 2h1v1h-1zM13 2h1v1h-1zM1 3h1v1h-1zM14 3h1v1h-1zM0 4h1v1h-1zM15 4h1v1h-1zM0 5h1v1h-1zM15 5h1v1h-1zM0 6h1v1h-1zM15 6h1v1h-1zM0 7h1v1h-1zM15 7h1v1h-1zM1 8h1v1h-1zM14 8h1v1h-1zM2 9h1v1h-1zM13 9h1v1h-1zM3 10h2v1h-2zM11 10h2v1h-2zM5 11h6v1h-6z"/></svg>
<svg class="a" style="left:284px;top:726px" width="16" height="16" viewBox="0 0 16 16" shape-rendering="crispEdges"><path fill="#000000" d="M0 0h16v1h-16zM0 1h1v1h-1zM15 1h1v1h-1zM0 2h1v1h-1zM5 2h1v1h-1zM10 2h3v1h-3zM15 2h1v1h-1zM0 3h1v1h-1zM4 3h3v1h-3zM15 3h1v1h-1zM0 4h1v1h-1zM4 4h1v1h-1zM6 4h1v1h-1zM10 4h3v1h-3zM15 4h1v1h-1zM0 5h1v1h-1zM3 5h5v1h-5zM15 5h1v1h-1zM0 6h1v1h-1zM2 6h3v1h-3zM6 6h3v1h-3zM10 6h3v1h-3zM15 6h1v1h-1zM0 7h1v1h-1zM15 7h1v1h-1zM0 8h1v1h-1zM2 8h11v1h-11zM15 8h1v1h-1zM0 9h1v1h-1zM15 9h1v1h-1zM0 10h1v1h-1zM2 10h11v1h-11zM15 10h1v1h-1zM0 11h1v1h-1zM15 11h1v1h-1zM0 12h1v1h-1zM2 12h11v1h-11zM15 12h1v1h-1zM0 13h1v1h-1zM15 13h1v1h-1zM0 14h16v1h-16z"/><path fill="#ffffff" d="M1 1h14v1h-14zM1 2h4v1h-4zM6 2h4v1h-4zM13 2h2v1h-2zM1 3h3v1h-3zM7 3h8v1h-8zM1 4h3v1h-3zM5 4h1v1h-1zM7 4h3v1h-3zM13 4h2v1h-2zM1 5h2v1h-2zM8 5h7v1h-7zM1 6h1v1h-1zM5 6h1v1h-1zM9 6h1v1h-1zM13 6h2v1h-2zM1 7h14v1h-14zM1 8h1v1h-1zM13 8h2v1h-2zM1 9h14v1h-14zM1 10h1v1h-1zM13 10h2v1h-2zM1 11h14v1h-14zM1 12h1v1h-1zM13 12h2v1h-2zM1 13h14v1h-14z"/><path fill="#808080" d="M1 15h15v1h-15z"/></svg>
<svg class="a" style="left:307px;top:726px" width="16" height="16" viewBox="0 0 16 16" shape-rendering="crispEdges"><path fill="#0000ff" d="M10 0h1v1h-1zM10 1h2v1h-2zM9 2h3v1h-3zM8 3h4v1h-4zM7 4h2v1h-2zM10 4h2v1h-2zM6 5h6v1h-6zM5 6h2v1h-2zM10 6h2v1h-2zM4 7h2v1h-2zM9 7h3v1h-3zM3 8h2v1h-2zM2 9h3v1h-3z"/><path fill="#909088" d="M12 0h2v1h-2zM12 1h2v1h-2zM12 2h2v1h-2zM12 3h2v1h-2zM12 4h2v1h-2zM12 5h2v1h-2zM12 6h2v1h-2zM12 7h2v1h-2zM12 8h2v1h-2zM12 9h2v1h-2zM12 10h2v1h-2zM12 11h2v1h-2zM12 12h2v1h-2zM12 13h1v1h-1z"/><path fill="#000000" d="M14 0h1v1h-1zM14 1h1v1h-1zM14 2h1v1h-1zM14 3h1v1h-1zM14 4h1v1h-1zM14 5h1v1h-1zM14 6h1v1h-1zM14 7h1v1h-1zM14 8h1v1h-1zM14 9h1v1h-1zM14 10h1v1h-1zM14 11h1v1h-1zM15 12h1v1h-1z"/><path fill="#000080" d="M9 4h1v1h-1zM9 6h1v1h-1zM8 8h4v1h-4zM8 9h4v1h-4zM1 10h5v1h-5zM7 10h5v1h-5zM0 11h5v1h-5zM7 11h5v1h-5zM2 12h2v1h-2zM7 12h5v1h-5zM7 13h5v1h-5zM8 14h4v1h-4zM9 15h2v1h-2z"/><path fill="#a8a890" d="M7 6h2v1h-2zM6 7h3v1h-3zM5 8h3v1h-3zM5 9h3v1h-3z"/></svg>
<svg class="a" style="left:337px;top:726px" width="15" height="12" viewBox="0 0 15 12" shape-rendering="crispEdges"><path fill="#000080" d="M5 0h3v1h-3zM4 1h1v1h-1zM8 1h1v1h-1zM4 2h1v1h-1zM8 2h1v1h-1zM4 3h1v1h-1zM7 3h1v1h-1zM7 4h1v1h-1zM11 4h2v1h-2zM7 5h1v1h-1zM11 5h3v1h-3zM5 6h3v1h-3zM11 6h3v1h-3zM6 7h1v1h-1zM12 7h2v1h-2zM13 8h1v1h-1zM13 9h1v1h-1z"/><path fill="#000000" d="M7 2h1v1h-1zM5 3h1v1h-1zM8 3h2v1h-2zM3 4h1v1h-1zM10 4h1v1h-1zM2 5h1v1h-1zM1 6h1v1h-1zM0 7h1v1h-1zM11 7h1v1h-1zM1 8h1v1h-1zM11 8h1v1h-1zM2 9h1v1h-1zM10 9h1v1h-1zM3 10h1v1h-1zM9 10h1v1h-1zM4 11h2v1h-2zM7 11h2v1h-2z"/><path fill="#ffffff" d="M6 3h1v1h-1zM4 4h3v1h-3zM8 4h2v1h-2zM3 5h4v1h-4zM8 5h1v1h-1zM10 5h1v1h-1zM2 6h3v1h-3zM1 7h5v1h-5zM2 8h3v1h-3zM3 9h1v1h-1z"/><path fill="#a0a0a0" d="M9 5h1v1h-1zM8 6h3v1h-3zM7 7h4v1h-4zM5 8h6v1h-6zM4 9h6v1h-6zM4 10h5v1h-5z"/></svg>
<svg class="a" style="left:336px;top:738px" width="16" height="4" viewBox="0 0 16 4" shape-rendering="crispEdges"><path fill="#00cc90" d="M0 0h16v1h-16zM0 1h16v1h-16zM0 2h16v1h-16zM0 3h16v1h-16z"/></svg>
<svg class="a" style="left:370px;top:726px" width="16" height="11" viewBox="0 0 16 11" shape-rendering="crispEdges"><path fill="#000000" d="M12 0h1v1h-1zM15 0h1v1h-1zM11 1h1v1h-1zM14 1h1v1h-1zM11 2h1v1h-1zM14 2h1v1h-1zM10 3h1v1h-1zM9 4h1v1h-1zM8 5h1v1h-1zM8 6h1v1h-1zM7 7h1v1h-1zM7 8h1v1h-1zM6 9h1v1h-1zM6 10h1v1h-1z"/><path fill="#ffff00" d="M13 0h2v1h-2zM12 1h2v1h-2zM12 2h2v1h-2z"/><path fill="#000080" d="M11 3h3v1h-3zM11 4h3v1h-3zM10 5h3v1h-3zM10 6h2v1h-2zM9 7h3v1h-3zM9 8h2v1h-2zM0 9h3v1h-3zM8 9h2v1h-2zM0 10h2v1h-2zM7 10h3v1h-3z"/><path fill="#ffffff" d="M10 4h1v1h-1zM9 5h1v1h-1zM9 6h1v1h-1zM8 7h1v1h-1zM8 8h1v1h-1zM7 9h1v1h-1z"/><path fill="#008080" d="M3 9h1v1h-1zM2 10h1v1h-1z"/></svg>
<svg class="a" style="left:370px;top:738px" width="16" height="4" viewBox="0 0 16 4" shape-rendering="crispEdges"><path fill="#000000" d="M0 0h16v1h-16zM0 1h16v1h-16zM0 2h16v1h-16zM0 3h16v1h-16z"/></svg>
<svg class="a" style="left:404px;top:726px" width="14" height="11" viewBox="0 0 14 11" shape-rendering="crispEdges"><path fill="#000080" d="M6 0h1v1h-1zM6 1h2v1h-2zM5 2h3v1h-3zM5 3h1v1h-1zM7 3h2v1h-2zM4 4h2v1h-2zM7 4h2v1h-2zM4 5h1v1h-1zM8 5h2v1h-2zM3 6h7v1h-7zM3 7h1v1h-1zM9 7h2v1h-2zM2 8h2v1h-2zM9 8h2v1h-2zM1 9h2v1h-2zM10 9h2v1h-2zM0 10h5v1h-5zM8 10h6v1h-6z"/></svg>
<svg class="a" style="left:404px;top:738px" width="16" height="4" viewBox="0 0 16 4" shape-rendering="crispEdges"><path fill="#000000" d="M0 0h16v1h-16zM0 1h16v1h-16zM0 2h16v1h-16zM0 3h16v1h-16z"/></svg>
<svg class="a" style="left:438px;top:728px" width="16" height="10" viewBox="0 0 16 10" shape-rendering="crispEdges"><path fill="#000000" d="M0 0h16v1h-16zM0 3h16v1h-16zM0 4h16v1h-16zM0 7h16v1h-16zM0 8h16v1h-16zM0 9h16v1h-16z"/></svg>
<svg class="a" style="left:461px;top:728px" width="15" height="10" viewBox="0 0 15 10" shape-rendering="crispEdges"><path fill="#000000" d="M0 0h15v1h-15zM0 3h1v1h-1zM2 3h1v1h-1zM4 3h1v1h-1zM6 3h1v1h-1zM8 3h1v1h-1zM10 3h1v1h-1zM12 3h1v1h-1zM14 3h1v1h-1zM0 6h3v1h-3zM4 6h3v1h-3zM8 6h3v1h-3zM12 6h3v1h-3zM0 9h1v1h-1zM3 9h2v1h-2zM7 9h1v1h-1zM10 9h2v1h-2zM14 9h1v1h-1z"/></svg>
<svg class="a" style="left:485px;top:726px" width="16" height="15" viewBox="0 0 16 15" shape-rendering="crispEdges"><path fill="#000000" d="M12 0h1v1h-1zM12 1h2v1h-2zM0 2h16v1h-16zM12 3h2v1h-2zM2 4h1v1h-1zM12 4h1v1h-1zM1 5h2v1h-2zM0 6h15v1h-15zM1 7h2v1h-2zM2 8h1v1h-1zM2 10h1v1h-1zM12 10h1v1h-1zM1 11h2v1h-2zM12 11h2v1h-2zM0 12h16v1h-16zM1 13h2v1h-2zM12 13h2v1h-2zM2 14h1v1h-1zM12 14h1v1h-1z"/></svg>
<svg class="a" style="left:508px;top:727px" width="13" height="13" viewBox="0 0 13 13" shape-rendering="crispEdges"><path fill="#000000" d="M0 0h11v1h-11zM0 1h1v1h-1zM10 1h1v1h-1zM0 2h1v1h-1zM10 2h2v1h-2zM0 3h1v1h-1zM10 3h1v1h-1zM12 3h1v1h-1zM0 4h1v1h-1zM10 4h2v1h-2zM0 5h1v1h-1zM10 5h1v1h-1zM12 5h1v1h-1zM0 6h1v1h-1zM10 6h2v1h-2zM0 7h1v1h-1zM10 7h1v1h-1zM12 7h1v1h-1zM0 8h1v1h-1zM10 8h2v1h-2zM0 9h1v1h-1zM10 9h1v1h-1zM12 9h1v1h-1zM0 10h12v1h-12zM2 11h1v1h-1zM4 11h1v1h-1zM6 11h1v1h-1zM8 11h1v1h-1zM10 11h1v1h-1zM12 11h1v1h-1zM1 12h1v1h-1zM3 12h1v1h-1zM5 12h1v1h-1zM7 12h1v1h-1zM9 12h1v1h-1zM11 12h1v1h-1z"/><path fill="#008080" d="M1 1h9v1h-9zM1 2h9v1h-9zM1 3h9v1h-9zM1 4h9v1h-9zM1 5h9v1h-9zM1 6h9v1h-9zM1 7h9v1h-9zM1 8h9v1h-9zM1 9h9v1h-9z"/></svg>
<svg class="a" style="left:530px;top:726px" width="16" height="16" viewBox="0 0 16 16" shape-rendering="crispEdges"><path fill="#808080" d="M5 0h11v1h-11zM14 1h2v1h-2zM13 2h1v1h-1zM15 2h1v1h-1zM12 3h1v1h-1zM15 3h1v1h-1zM11 4h1v1h-1zM15 4h1v1h-1zM15 5h1v1h-1zM15 6h1v1h-1zM15 7h1v1h-1zM15 8h1v1h-1zM15 9h1v1h-1zM15 10h1v1h-1zM14 11h1v1h-1zM13 12h1v1h-1zM12 13h1v1h-1zM12 14h1v1h-1z"/><path fill="#000000" d="M4 1h1v1h-1zM3 2h1v1h-1zM2 3h1v1h-1zM1 4h1v1h-1zM0 5h1v1h-1zM0 6h1v1h-1zM0 7h1v1h-1zM0 8h1v1h-1zM0 9h1v1h-1zM0 10h1v1h-1zM0 11h1v1h-1zM0 12h1v1h-1zM0 13h1v1h-1zM0 14h1v1h-1zM0 15h12v1h-12z"/><path fill="#ffffff" d="M5 1h1v1h-1zM7 1h1v1h-1zM9 1h1v1h-1zM11 1h1v1h-1zM13 1h1v1h-1zM4 2h1v1h-1zM6 2h1v1h-1zM8 2h1v1h-1zM10 2h1v1h-1zM12 2h1v1h-1zM3 3h1v1h-1zM5 3h1v1h-1zM7 3h1v1h-1zM9 3h1v1h-1zM11 3h1v1h-1zM2 4h1v1h-1zM4 4h1v1h-1zM6 4h1v1h-1zM8 4h1v1h-1zM10 4h1v1h-1z"/><path fill="#c0c0c0" d="M6 1h1v1h-1zM8 1h1v1h-1zM10 1h1v1h-1zM12 1h1v1h-1zM5 2h1v1h-1zM7 2h1v1h-1zM9 2h1v1h-1zM11 2h1v1h-1zM14 2h1v1h-1zM4 3h1v1h-1zM6 3h1v1h-1zM8 3h1v1h-1zM10 3h1v1h-1zM13 3h2v1h-2zM3 4h1v1h-1zM5 4h1v1h-1zM7 4h1v1h-1zM9 4h1v1h-1zM12 4h3v1h-3zM12 5h3v1h-3zM12 6h3v1h-3zM12 7h3v1h-3zM12 8h3v1h-3zM12 9h3v1h-3zM12 10h3v1h-3zM12 11h2v1h-2zM12 12h1v1h-1z"/><path fill="#008080" d="M1 5h11v1h-11zM1 6h11v1h-11zM1 7h11v1h-11zM1 8h11v1h-11zM1 9h11v1h-11zM1 10h11v1h-11zM1 11h11v1h-11zM1 12h11v1h-11zM1 13h11v1h-11zM1 14h11v1h-11z"/></svg>
</body></html>
